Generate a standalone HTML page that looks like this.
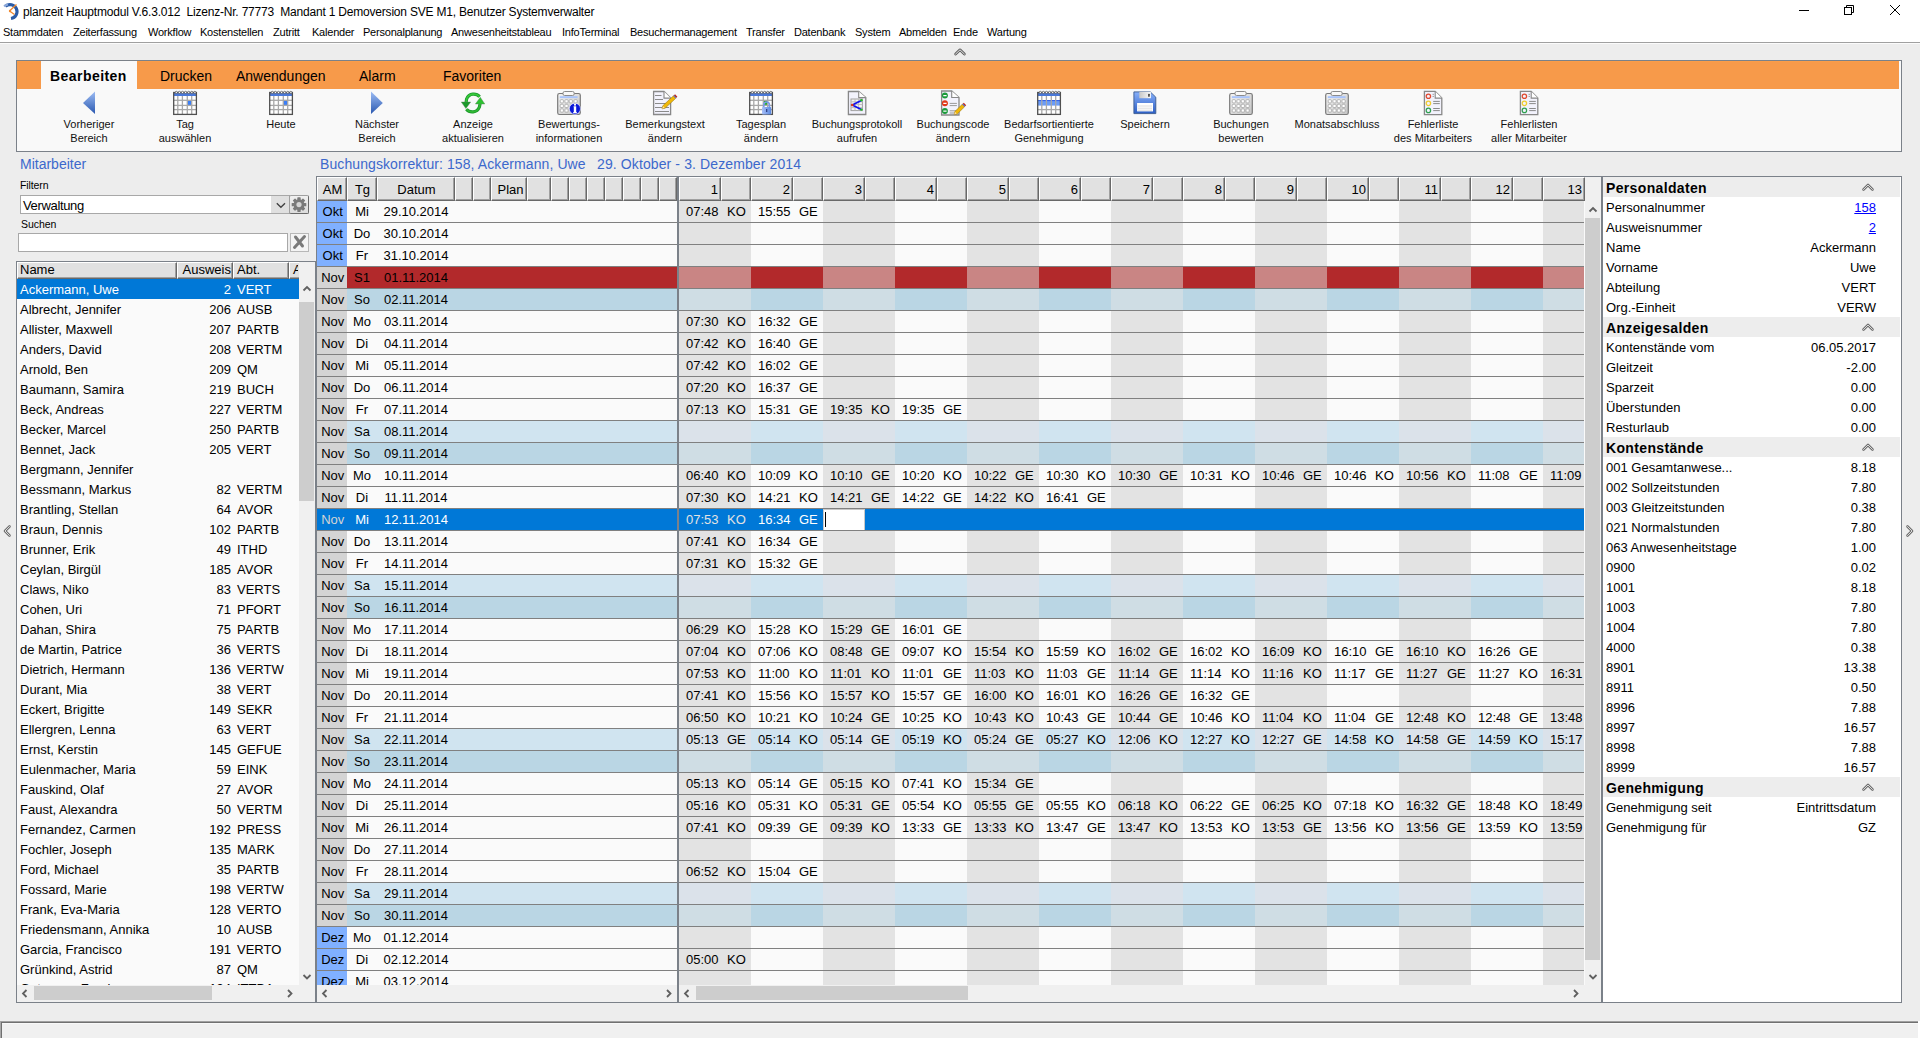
<!DOCTYPE html><html><head><meta charset="utf-8"><title>planzeit</title><style>
*{margin:0;padding:0;box-sizing:border-box}
html,body{width:1920px;height:1040px;overflow:hidden}
body{position:relative;background:#ededed;font-family:"Liberation Sans",sans-serif;color:#000;font-size:13px}
div{position:absolute}
.t{white-space:nowrap}
svg{position:absolute;overflow:visible}
</style></head><body><div style="left:0px;top:0px;width:1920px;height:42px;background:#fff"></div>
<div style="left:0px;top:42px;width:1920px;height:1px;background:#a0a0a0"></div>
<div style="left:0px;top:43px;width:1920px;height:1px;background:#fbfbfb"></div>
<svg style="left:2px;top:2px" width="18" height="18" viewBox="0 0 18 18">
<path d="M3.5 4.2 A7 7 0 1 1 9 16.5" fill="none" stroke="#2a5ca8" stroke-width="3.2"/>
<path d="M2.2 4.5 A7 7 0 0 1 6 2.4" fill="none" stroke="#8aa6d8" stroke-width="2.4"/>
<path d="M7.5 9 L14.5 2.5 M7.5 9 L12.5 12.5" stroke="#f08a30" stroke-width="1.3"/><circle cx="8" cy="9" r="1.2" fill="#f08a30"/>
</svg>
<div class="t" style="left:23px;top:2px;font-size:12px;line-height:21px;letter-spacing:-0.2px;white-space:pre;color:#000">planzeit Hauptmodul V.6.3.012  Lizenz-Nr. 77773  Mandant 1 Demoversion SVE M1, Benutzer Systemverwalter</div>
<div style="left:1799px;top:10px;width:10px;height:1px;background:#000"></div>
<svg style="left:1840px;top:2px" width="18" height="18" viewBox="0 0 18 18">
<rect x="4.5" y="5.5" width="7" height="7" fill="none" stroke="#000" stroke-width="1"/>
<path d="M6.5 5.5 V3.5 H13.5 V10.5 H11.5" fill="none" stroke="#000" stroke-width="1"/>
</svg>
<svg style="left:1886px;top:2px" width="18" height="18" viewBox="0 0 18 18">
<path d="M4 3 L14 13 M14 3 L4 13" stroke="#000" stroke-width="1"/>
</svg>
<div class="t" style="left:3px;top:23px;font-size:11px;line-height:18px;letter-spacing:-0.22px">Stammdaten</div>
<div class="t" style="left:73px;top:23px;font-size:11px;line-height:18px;letter-spacing:-0.22px">Zeiterfassung</div>
<div class="t" style="left:148px;top:23px;font-size:11px;line-height:18px;letter-spacing:-0.22px">Workflow</div>
<div class="t" style="left:200px;top:23px;font-size:11px;line-height:18px;letter-spacing:-0.22px">Kostenstellen</div>
<div class="t" style="left:273px;top:23px;font-size:11px;line-height:18px;letter-spacing:-0.22px">Zutritt</div>
<div class="t" style="left:312px;top:23px;font-size:11px;line-height:18px;letter-spacing:-0.22px">Kalender</div>
<div class="t" style="left:363px;top:23px;font-size:11px;line-height:18px;letter-spacing:-0.22px">Personalplanung</div>
<div class="t" style="left:451px;top:23px;font-size:11px;line-height:18px;letter-spacing:-0.22px">Anwesenheitstableau</div>
<div class="t" style="left:562px;top:23px;font-size:11px;line-height:18px;letter-spacing:-0.22px">InfoTerminal</div>
<div class="t" style="left:630px;top:23px;font-size:11px;line-height:18px;letter-spacing:-0.22px">Besuchermanagement</div>
<div class="t" style="left:746px;top:23px;font-size:11px;line-height:18px;letter-spacing:-0.22px">Transfer</div>
<div class="t" style="left:794px;top:23px;font-size:11px;line-height:18px;letter-spacing:-0.22px">Datenbank</div>
<div class="t" style="left:855px;top:23px;font-size:11px;line-height:18px;letter-spacing:-0.22px">System</div>
<div class="t" style="left:899px;top:23px;font-size:11px;line-height:18px;letter-spacing:-0.22px">Abmelden</div>
<div class="t" style="left:953px;top:23px;font-size:11px;line-height:18px;letter-spacing:-0.22px">Ende</div>
<div class="t" style="left:987px;top:23px;font-size:11px;line-height:18px;letter-spacing:-0.22px">Wartung</div>
<svg style="left:952px;top:45px" width="16" height="12" viewBox="0 0 16 12">
<path d="M3.6 9 L8 4.8 L12.4 9" fill="none" stroke="#606060" stroke-width="2.7" stroke-linecap="round" stroke-linejoin="round"/>
<path d="M3.6 9 L8 4.8 L12.4 9" fill="none" stroke="#f4f4f4" stroke-width="0.9" stroke-linecap="round" stroke-linejoin="round"/>
</svg>
<div style="left:16px;top:60px;width:1886px;height:92px;border:1px solid #7b8189;background:#f9f9f9"></div>
<div style="left:17px;top:61px;width:1882px;height:28px;background:#f79a4a"></div>
<div style="left:17px;top:61px;width:1882px;height:1px;background:#fb9d48"></div>
<div style="left:41px;top:61px;width:96px;height:28px;background:#f9f9f9"></div>
<div class="t" style="left:50px;top:65px;font-size:14px;font-weight:bold;line-height:23px;letter-spacing:0.45px">Bearbeiten</div>
<div class="t" style="left:160px;top:65px;font-size:14px;line-height:23px">Drucken</div>
<div class="t" style="left:236px;top:65px;font-size:14px;line-height:23px">Anwendungen</div>
<div class="t" style="left:359px;top:65px;font-size:14px;line-height:23px">Alarm</div>
<div class="t" style="left:443px;top:65px;font-size:14px;line-height:23px">Favoriten</div>
<svg style="left:77px;top:91px" width="24" height="24" viewBox="0 0 24 24"><defs><linearGradient id="gb" x1="0" y1="0" x2="0" y2="1"><stop offset="0" stop-color="#9cbcf4"/><stop offset="1" stop-color="#2a58b0"/></linearGradient><linearGradient id="gclip" x1="0" y1="0" x2="1" y2="1"><stop offset="0" stop-color="#f4f4f4"/><stop offset="1" stop-color="#c4c4c4"/></linearGradient><linearGradient id="gflop" x1="0" y1="0" x2="0" y2="1"><stop offset="0" stop-color="#88b0fa"/><stop offset="1" stop-color="#2c5ec4"/></linearGradient><linearGradient id="gshut" x1="0" y1="0" x2="1" y2="0"><stop offset="0" stop-color="#c8c8c8"/><stop offset="1" stop-color="#fafafa"/></linearGradient><linearGradient id="glock" x1="0" y1="0" x2="1" y2="0"><stop offset="0" stop-color="#a8c0f8"/><stop offset="1" stop-color="#5a88e0"/></linearGradient></defs><path d="M18 0.5 V23 L6 12 Z" fill="url(#gb)"/></svg>
<div class="t" style="left:29px;top:117px;width:120px;font-size:11px;line-height:14px;text-align:center;color:#111">Vorheriger</div>
<div class="t" style="left:29px;top:131px;width:120px;font-size:11px;line-height:14px;text-align:center;color:#111">Bereich</div>
<svg style="left:173px;top:91px" width="24" height="24" viewBox="0 0 24 24"><rect x="0.7" y="1.5" width="22.7" height="21.9" fill="#fff"/><rect x="14.3" y="9.3" width="4.4" height="5.1" fill="#3a7ef8"/><line x1="4.8" y1="5" x2="4.8" y2="23.4" stroke="#a8a8a8" stroke-width="1.3"/><line x1="9.4" y1="5" x2="9.4" y2="23.4" stroke="#a8a8a8" stroke-width="1.3"/><line x1="14.3" y1="5" x2="14.3" y2="23.4" stroke="#a8a8a8" stroke-width="1.3"/><line x1="18.7" y1="5" x2="18.7" y2="23.4" stroke="#a8a8a8" stroke-width="1.3"/><line x1="0.7" y1="9.3" x2="23.4" y2="9.3" stroke="#a8a8a8" stroke-width="1.3"/><line x1="0.7" y1="14.4" x2="23.4" y2="14.4" stroke="#a8a8a8" stroke-width="1.3"/><line x1="0.7" y1="18.6" x2="23.4" y2="18.6" stroke="#a8a8a8" stroke-width="1.3"/><rect x="0.7" y="1.8" width="22.7" height="3.2" fill="#4a78d8"/><rect x="0.7" y="1.5" width="22.7" height="21.9" fill="none" stroke="#505050" stroke-width="1.3"/><circle cx="3.3" cy="1.4" r="1.1" fill="#fff" stroke="#505050" stroke-width="0.7"/><circle cx="6.4" cy="1.4" r="1.1" fill="#fff" stroke="#505050" stroke-width="0.7"/><circle cx="9.5" cy="1.4" r="1.1" fill="#fff" stroke="#505050" stroke-width="0.7"/><circle cx="12.6" cy="1.4" r="1.1" fill="#fff" stroke="#505050" stroke-width="0.7"/><circle cx="15.7" cy="1.4" r="1.1" fill="#fff" stroke="#505050" stroke-width="0.7"/><circle cx="18.8" cy="1.4" r="1.1" fill="#fff" stroke="#505050" stroke-width="0.7"/><circle cx="21.9" cy="1.4" r="1.1" fill="#fff" stroke="#505050" stroke-width="0.7"/></svg>
<div class="t" style="left:125px;top:117px;width:120px;font-size:11px;line-height:14px;text-align:center;color:#111">Tag</div>
<div class="t" style="left:125px;top:131px;width:120px;font-size:11px;line-height:14px;text-align:center;color:#111">auswählen</div>
<svg style="left:269px;top:91px" width="24" height="24" viewBox="0 0 24 24"><rect x="0.7" y="1.5" width="22.7" height="21.9" fill="#fff"/><rect x="14.3" y="9.3" width="4.4" height="5.1" fill="#3a7ef8"/><line x1="4.8" y1="5" x2="4.8" y2="23.4" stroke="#a8a8a8" stroke-width="1.3"/><line x1="9.4" y1="5" x2="9.4" y2="23.4" stroke="#a8a8a8" stroke-width="1.3"/><line x1="14.3" y1="5" x2="14.3" y2="23.4" stroke="#a8a8a8" stroke-width="1.3"/><line x1="18.7" y1="5" x2="18.7" y2="23.4" stroke="#a8a8a8" stroke-width="1.3"/><line x1="0.7" y1="9.3" x2="23.4" y2="9.3" stroke="#a8a8a8" stroke-width="1.3"/><line x1="0.7" y1="14.4" x2="23.4" y2="14.4" stroke="#a8a8a8" stroke-width="1.3"/><line x1="0.7" y1="18.6" x2="23.4" y2="18.6" stroke="#a8a8a8" stroke-width="1.3"/><rect x="0.7" y="1.8" width="22.7" height="3.2" fill="#4a78d8"/><rect x="0.7" y="1.5" width="22.7" height="21.9" fill="none" stroke="#505050" stroke-width="1.3"/><circle cx="3.3" cy="1.4" r="1.1" fill="#fff" stroke="#505050" stroke-width="0.7"/><circle cx="6.4" cy="1.4" r="1.1" fill="#fff" stroke="#505050" stroke-width="0.7"/><circle cx="9.5" cy="1.4" r="1.1" fill="#fff" stroke="#505050" stroke-width="0.7"/><circle cx="12.6" cy="1.4" r="1.1" fill="#fff" stroke="#505050" stroke-width="0.7"/><circle cx="15.7" cy="1.4" r="1.1" fill="#fff" stroke="#505050" stroke-width="0.7"/><circle cx="18.8" cy="1.4" r="1.1" fill="#fff" stroke="#505050" stroke-width="0.7"/><circle cx="21.9" cy="1.4" r="1.1" fill="#fff" stroke="#505050" stroke-width="0.7"/></svg>
<div class="t" style="left:221px;top:117px;width:120px;font-size:11px;line-height:14px;text-align:center;color:#111">Heute</div>
<svg style="left:365px;top:91px" width="24" height="24" viewBox="0 0 24 24"><path d="M6 0.5 V23 L17.8 12 Z" fill="url(#gb)"/></svg>
<div class="t" style="left:317px;top:117px;width:120px;font-size:11px;line-height:14px;text-align:center;color:#111">Nächster</div>
<div class="t" style="left:317px;top:131px;width:120px;font-size:11px;line-height:14px;text-align:center;color:#111">Bereich</div>
<svg style="left:461px;top:91px" width="24" height="24" viewBox="0 0 24 24"><path d="M18.6 5.8 C15.5 2 8 1.8 5.6 8 L5.1 11.5" fill="none" stroke="#1c9a2c" stroke-width="3.2"/><path d="M18.6 5.8 C15.5 2 8 1.8 5.6 8 L5.1 11.5" fill="none" stroke="#36c83a" stroke-width="1.6"/><path d="M0.3 11 H9.7 L4.9 17.5 Z" fill="#1a9a2a" stroke="#5a7a5a" stroke-width="0.4"/><path d="M5.4 18.2 C8.5 22 16 22.2 18.4 16 L19.1 12.5" fill="none" stroke="#1c9a2c" stroke-width="3.2"/><path d="M5.4 18.2 C8.5 22 16 22.2 18.4 16 L19.1 12.5" fill="none" stroke="#30b834" stroke-width="1.6"/><path d="M14.4 13 H23.8 L19.3 6.3 Z" fill="#2cc430" stroke="#5a7a5a" stroke-width="0.4"/></svg>
<div class="t" style="left:413px;top:117px;width:120px;font-size:11px;line-height:14px;text-align:center;color:#111">Anzeige</div>
<div class="t" style="left:413px;top:131px;width:120px;font-size:11px;line-height:14px;text-align:center;color:#111">aktualisieren</div>
<svg style="left:557px;top:91px" width="24" height="24" viewBox="0 0 24 24"><rect x="0.7" y="2.5" width="22.6" height="21" rx="1.8" fill="url(#gclip)" stroke="#7a7a7a" stroke-width="1.2"/><rect x="6" y="0.5" width="11.2" height="4" rx="1.6" fill="#f8f8f8" stroke="#8a8a8a" stroke-width="1"/><rect x="2.8" y="5.2" width="17.8" height="1.9" fill="#a8c4fc"/><rect x="3.2" y="8.7" width="3.2" height="3.2" rx="0.8" fill="#fff" stroke="#a4a4a4" stroke-width="0.8"/><rect x="7.9" y="8.7" width="3.2" height="3.2" rx="0.8" fill="#fff" stroke="#a4a4a4" stroke-width="0.8"/><rect x="12.2" y="8.7" width="3.2" height="3.2" rx="0.8" fill="#fff" stroke="#a4a4a4" stroke-width="0.8"/><rect x="17.0" y="8.7" width="3.2" height="3.2" rx="0.8" fill="#fff" stroke="#a4a4a4" stroke-width="0.8"/><rect x="3.2" y="13.3" width="3.2" height="3.2" rx="0.8" fill="#fff" stroke="#a4a4a4" stroke-width="0.8"/><rect x="7.9" y="13.3" width="3.2" height="3.2" rx="0.8" fill="#fff" stroke="#a4a4a4" stroke-width="0.8"/><rect x="3.2" y="17.9" width="3.2" height="3.2" rx="0.8" fill="#fff" stroke="#a4a4a4" stroke-width="0.8"/><rect x="7.9" y="17.9" width="3.2" height="3.2" rx="0.8" fill="#fff" stroke="#a4a4a4" stroke-width="0.8"/><circle cx="17.9" cy="17.8" r="5.6" fill="#0a18d8" stroke="#fff" stroke-width="0.6"/><path d="M16.6 15.2 H19.2 V21.2 H20 V22.2 H16 V21.2 H16.8 V16.2 H16.6 Z" fill="#fff"/><circle cx="18" cy="13.7" r="1.1" fill="#fff"/></svg>
<div class="t" style="left:509px;top:117px;width:120px;font-size:11px;line-height:14px;text-align:center;color:#111">Bewertungs-</div>
<div class="t" style="left:509px;top:131px;width:120px;font-size:11px;line-height:14px;text-align:center;color:#111">informationen</div>
<svg style="left:653px;top:91px" width="24" height="24" viewBox="0 0 24 24"><path d="M0.6 0.5 H11 L17.6 7.1 V23.5 H0.6 Z" fill="#f2f2fc" stroke="#888" stroke-width="1.3"/><path d="M11 0.5 V7.1 H17.6" fill="#fff" stroke="#888" stroke-width="1.1"/><path d="M2 4.5 H8.5 M2 8.5 H10 M2 12.5 H16 M2 16.5 H16 M2 20.5 H16" stroke="#8a8a8a" stroke-width="1.1"/><path d="M9.00 17.80 L12.06 17.27 L22.75 7.34 L20.43 4.85 L9.75 14.78 Z" fill="#f0b808" stroke="#8a6a10" stroke-width="0.5"/><path d="M9.00 17.80 L11.60 16.78 L10.21 15.28 Z" fill="#ffe0a0"/><path d="M22.75 7.34 L24.36 5.85 L22.04 3.35 L20.43 4.85 Z" fill="#c02818"/><path d="M22.75 7.34 L23.41 6.73 L21.09 4.24 L20.43 4.85 Z" fill="#4a8af0"/></svg>
<div class="t" style="left:605px;top:117px;width:120px;font-size:11px;line-height:14px;text-align:center;color:#111">Bemerkungstext</div>
<div class="t" style="left:605px;top:131px;width:120px;font-size:11px;line-height:14px;text-align:center;color:#111">ändern</div>
<svg style="left:749px;top:91px" width="24" height="24" viewBox="0 0 24 24"><rect x="0.7" y="1.5" width="22.7" height="21.9" fill="#fff"/><rect x="14.3" y="9.3" width="4.4" height="5.1" fill="#22b030"/><line x1="4.8" y1="5" x2="4.8" y2="23.4" stroke="#a8a8a8" stroke-width="1.3"/><line x1="9.4" y1="5" x2="9.4" y2="23.4" stroke="#a8a8a8" stroke-width="1.3"/><line x1="14.3" y1="5" x2="14.3" y2="23.4" stroke="#a8a8a8" stroke-width="1.3"/><line x1="18.7" y1="5" x2="18.7" y2="23.4" stroke="#a8a8a8" stroke-width="1.3"/><line x1="0.7" y1="9.3" x2="23.4" y2="9.3" stroke="#a8a8a8" stroke-width="1.3"/><line x1="0.7" y1="14.4" x2="23.4" y2="14.4" stroke="#a8a8a8" stroke-width="1.3"/><line x1="0.7" y1="18.6" x2="23.4" y2="18.6" stroke="#a8a8a8" stroke-width="1.3"/><rect x="0.7" y="1.8" width="22.7" height="3.2" fill="#4a78d8"/><rect x="0.7" y="1.5" width="22.7" height="21.9" fill="none" stroke="#505050" stroke-width="1.3"/><circle cx="3.3" cy="1.4" r="1.1" fill="#fff" stroke="#505050" stroke-width="0.7"/><circle cx="6.4" cy="1.4" r="1.1" fill="#fff" stroke="#505050" stroke-width="0.7"/><circle cx="9.5" cy="1.4" r="1.1" fill="#fff" stroke="#505050" stroke-width="0.7"/><circle cx="12.6" cy="1.4" r="1.1" fill="#fff" stroke="#505050" stroke-width="0.7"/><circle cx="15.7" cy="1.4" r="1.1" fill="#fff" stroke="#505050" stroke-width="0.7"/><circle cx="18.8" cy="1.4" r="1.1" fill="#fff" stroke="#505050" stroke-width="0.7"/><circle cx="21.9" cy="1.4" r="1.1" fill="#fff" stroke="#505050" stroke-width="0.7"/><path d="M14.8 16 V13.8 A2.8 2.8 0 0 1 20.4 13.8 V16" fill="none" stroke="#7a9ae8" stroke-width="1.6"/><rect x="13" y="16" width="9.2" height="7.5" rx="0.8" fill="url(#glock)"/><rect x="17.1" y="18" width="1.2" height="3" fill="#2a3a80"/></svg>
<div class="t" style="left:701px;top:117px;width:120px;font-size:11px;line-height:14px;text-align:center;color:#111">Tagesplan</div>
<div class="t" style="left:701px;top:131px;width:120px;font-size:11px;line-height:14px;text-align:center;color:#111">ändern</div>
<svg style="left:845px;top:91px" width="24" height="24" viewBox="0 0 24 24"><path d="M3.4 0.5 H13.7 L20.8 6.6 V23.5 H3.4 Z" fill="#f2f2fc" stroke="#888" stroke-width="1.3"/><path d="M13.7 0.5 V6.6 H20.8" fill="#fff" stroke="#888" stroke-width="1.1"/><rect x="6" y="8" width="11.4" height="11.6" fill="#f4f4f4" stroke="#a0a0a0" stroke-width="1"/><path d="M6 10.8 H17.4 M6 13.6 H17.4 M6 16.6 H17.4 M10 8 V19.6 M13.6 8 V19.6" stroke="#b8b8b8" stroke-width="0.9"/><path d="M16.3 9.4 L7.3 14 L16.3 18.5" fill="none" stroke="#1010f0" stroke-width="1.7"/><circle cx="7.3" cy="14" r="1.3" fill="#e03a10"/><circle cx="16.4" cy="9.3" r="1.2" fill="#20c020"/><circle cx="16.4" cy="18.6" r="1.2" fill="#20c020"/></svg>
<div class="t" style="left:797px;top:117px;width:120px;font-size:11px;line-height:14px;text-align:center;color:#111">Buchungsprotokoll</div>
<div class="t" style="left:797px;top:131px;width:120px;font-size:11px;line-height:14px;text-align:center;color:#111">aufrufen</div>
<svg style="left:941px;top:91px" width="24" height="24" viewBox="0 0 24 24"><path d="M0.6 0 H10.7 L18 6.5 V24 H0.6 Z" fill="#f2f2fc" stroke="#888" stroke-width="1.3"/><path d="M10.7 0 V6.5 H18" fill="#fff" stroke="#888" stroke-width="1.1"/><circle cx="3.9" cy="4.6" r="3" fill="#1a9a3a"/><circle cx="3.9" cy="12.3" r="3" fill="#e03818"/><circle cx="3.9" cy="20.1" r="3" fill="#1a9a3a"/><path d="M2.3 4.6 H5.6 M2.3 12.3 H5.6 M2.3 20.1 H5.6" stroke="#fff" stroke-width="1.2"/><path d="M8.7 12.4 H15.9 M8.7 14.6 H15.9 M8.7 19.8 H15.9 M8.7 22 H13" stroke="#9a9a9a" stroke-width="1"/><path d="M13.20 23.60 L16.25 22.99 L23.62 15.75 L21.24 13.33 L13.86 20.57 Z" fill="#f0b808" stroke="#8a6a10" stroke-width="0.5"/><path d="M13.20 23.60 L15.77 22.51 L14.34 21.05 Z" fill="#ffe0a0"/><path d="M23.62 15.75 L25.19 14.21 L22.81 11.79 L21.24 13.33 Z" fill="#c02818"/><path d="M23.62 15.75 L24.26 15.12 L21.88 12.70 L21.24 13.33 Z" fill="#4a8af0"/></svg>
<div class="t" style="left:893px;top:117px;width:120px;font-size:11px;line-height:14px;text-align:center;color:#111">Buchungscode</div>
<div class="t" style="left:893px;top:131px;width:120px;font-size:11px;line-height:14px;text-align:center;color:#111">ändern</div>
<svg style="left:1037px;top:91px" width="24" height="24" viewBox="0 0 24 24"><rect x="0.7" y="1.5" width="22.7" height="21.9" fill="#fff"/><rect x="0.7" y="9.3" width="22.7" height="5.3" fill="#6a9cf8"/><line x1="0.7" y1="9.6" x2="23.4" y2="9.6" stroke="#2a5ae8" stroke-width="1"/><line x1="4.8" y1="5" x2="4.8" y2="23.4" stroke="#a8a8a8" stroke-width="1.3"/><line x1="9.4" y1="5" x2="9.4" y2="23.4" stroke="#a8a8a8" stroke-width="1.3"/><line x1="14.3" y1="5" x2="14.3" y2="23.4" stroke="#a8a8a8" stroke-width="1.3"/><line x1="18.7" y1="5" x2="18.7" y2="23.4" stroke="#a8a8a8" stroke-width="1.3"/><line x1="0.7" y1="18.6" x2="23.4" y2="18.6" stroke="#a8a8a8" stroke-width="1.3"/><rect x="0.7" y="1.8" width="22.7" height="3.2" fill="#4a78d8"/><rect x="0.7" y="1.5" width="22.7" height="21.9" fill="none" stroke="#505050" stroke-width="1.3"/><circle cx="3.3" cy="1.4" r="1.1" fill="#fff" stroke="#505050" stroke-width="0.7"/><circle cx="6.4" cy="1.4" r="1.1" fill="#fff" stroke="#505050" stroke-width="0.7"/><circle cx="9.5" cy="1.4" r="1.1" fill="#fff" stroke="#505050" stroke-width="0.7"/><circle cx="12.6" cy="1.4" r="1.1" fill="#fff" stroke="#505050" stroke-width="0.7"/><circle cx="15.7" cy="1.4" r="1.1" fill="#fff" stroke="#505050" stroke-width="0.7"/><circle cx="18.8" cy="1.4" r="1.1" fill="#fff" stroke="#505050" stroke-width="0.7"/><circle cx="21.9" cy="1.4" r="1.1" fill="#fff" stroke="#505050" stroke-width="0.7"/></svg>
<div class="t" style="left:989px;top:117px;width:120px;font-size:11px;line-height:14px;text-align:center;color:#111">Bedarfsortientierte</div>
<div class="t" style="left:989px;top:131px;width:120px;font-size:11px;line-height:14px;text-align:center;color:#111">Genehmigung</div>
<svg style="left:1133px;top:91px" width="24" height="24" viewBox="0 0 24 24"><path d="M0.9 0.9 H17.3 L22.8 6.2 V22.6 H0.9 Z" fill="url(#gflop)" stroke="#3a5a90" stroke-width="0.9"/><rect x="6.3" y="0.9" width="11.6" height="6.3" fill="url(#gshut)"/><rect x="15.2" y="2.7" width="1.5" height="3.1" rx="0.6" fill="#303030"/><rect x="4.1" y="12" width="15.9" height="8.4" fill="#fff"/><path d="M5 15 H19 M5 17.2 H19 M5 19.2 H19" stroke="#c8c8c8" stroke-width="0.6"/></svg>
<div class="t" style="left:1085px;top:117px;width:120px;font-size:11px;line-height:14px;text-align:center;color:#111">Speichern</div>
<svg style="left:1229px;top:91px" width="24" height="24" viewBox="0 0 24 24"><rect x="0.7" y="2.5" width="22.6" height="21" rx="1.8" fill="url(#gclip)" stroke="#7a7a7a" stroke-width="1.2"/><rect x="6" y="0.5" width="11.2" height="4" rx="1.6" fill="#f8f8f8" stroke="#8a8a8a" stroke-width="1"/><rect x="2.8" y="5.2" width="17.8" height="1.9" fill="#a8c4fc"/><rect x="3.2" y="8.7" width="3.2" height="3.2" rx="0.8" fill="#fff" stroke="#a4a4a4" stroke-width="0.8"/><rect x="7.9" y="8.7" width="3.2" height="3.2" rx="0.8" fill="#fff" stroke="#a4a4a4" stroke-width="0.8"/><rect x="12.2" y="8.7" width="3.2" height="3.2" rx="0.8" fill="#fff" stroke="#a4a4a4" stroke-width="0.8"/><rect x="17.0" y="8.7" width="3.2" height="3.2" rx="0.8" fill="#fff" stroke="#a4a4a4" stroke-width="0.8"/><rect x="3.2" y="13.3" width="3.2" height="3.2" rx="0.8" fill="#fff" stroke="#a4a4a4" stroke-width="0.8"/><rect x="7.9" y="13.3" width="3.2" height="3.2" rx="0.8" fill="#fff" stroke="#a4a4a4" stroke-width="0.8"/><rect x="12.2" y="13.3" width="3.2" height="3.2" rx="0.8" fill="#fff" stroke="#a4a4a4" stroke-width="0.8"/><rect x="17.0" y="13.3" width="3.2" height="3.2" rx="0.8" fill="#fff" stroke="#a4a4a4" stroke-width="0.8"/><rect x="3.2" y="17.9" width="3.2" height="3.2" rx="0.8" fill="#fff" stroke="#a4a4a4" stroke-width="0.8"/><rect x="7.9" y="17.9" width="3.2" height="3.2" rx="0.8" fill="#fff" stroke="#a4a4a4" stroke-width="0.8"/><rect x="12.2" y="17.9" width="3.2" height="3.2" rx="0.8" fill="#fff" stroke="#a4a4a4" stroke-width="0.8"/><rect x="17.0" y="17.9" width="3.2" height="3.2" rx="0.8" fill="#fff" stroke="#a4a4a4" stroke-width="0.8"/></svg>
<div class="t" style="left:1181px;top:117px;width:120px;font-size:11px;line-height:14px;text-align:center;color:#111">Buchungen</div>
<div class="t" style="left:1181px;top:131px;width:120px;font-size:11px;line-height:14px;text-align:center;color:#111">bewerten</div>
<svg style="left:1325px;top:91px" width="24" height="24" viewBox="0 0 24 24"><rect x="0.7" y="2.5" width="22.6" height="21" rx="1.8" fill="url(#gclip)" stroke="#7a7a7a" stroke-width="1.2"/><rect x="6" y="0.5" width="11.2" height="4" rx="1.6" fill="#f8f8f8" stroke="#8a8a8a" stroke-width="1"/><rect x="2.8" y="5.2" width="17.8" height="1.9" fill="#a8c4fc"/><rect x="3.2" y="8.7" width="3.2" height="3.2" rx="0.8" fill="#fff" stroke="#a4a4a4" stroke-width="0.8"/><rect x="7.9" y="8.7" width="3.2" height="3.2" rx="0.8" fill="#fff" stroke="#a4a4a4" stroke-width="0.8"/><rect x="12.2" y="8.7" width="3.2" height="3.2" rx="0.8" fill="#fff" stroke="#a4a4a4" stroke-width="0.8"/><rect x="17.0" y="8.7" width="3.2" height="3.2" rx="0.8" fill="#fff" stroke="#a4a4a4" stroke-width="0.8"/><rect x="3.2" y="13.3" width="3.2" height="3.2" rx="0.8" fill="#fff" stroke="#a4a4a4" stroke-width="0.8"/><rect x="7.9" y="13.3" width="3.2" height="3.2" rx="0.8" fill="#fff" stroke="#a4a4a4" stroke-width="0.8"/><rect x="12.2" y="13.3" width="3.2" height="3.2" rx="0.8" fill="#fff" stroke="#a4a4a4" stroke-width="0.8"/><rect x="17.0" y="13.3" width="3.2" height="3.2" rx="0.8" fill="#fff" stroke="#a4a4a4" stroke-width="0.8"/><rect x="3.2" y="17.9" width="3.2" height="3.2" rx="0.8" fill="#fff" stroke="#a4a4a4" stroke-width="0.8"/><rect x="7.9" y="17.9" width="3.2" height="3.2" rx="0.8" fill="#fff" stroke="#a4a4a4" stroke-width="0.8"/><rect x="12.2" y="17.9" width="3.2" height="3.2" rx="0.8" fill="#fff" stroke="#a4a4a4" stroke-width="0.8"/><rect x="17.0" y="17.9" width="3.2" height="3.2" rx="0.8" fill="#fff" stroke="#a4a4a4" stroke-width="0.8"/></svg>
<div class="t" style="left:1277px;top:117px;width:120px;font-size:11px;line-height:14px;text-align:center;color:#111">Monatsabschluss</div>
<svg style="left:1421px;top:91px" width="24" height="24" viewBox="0 0 24 24"><path d="M3.4 0.4 H14.2 L20.8 7.1 V23.6 H3.4 Z" fill="#f2f2fc" stroke="#888" stroke-width="1.3"/><path d="M14.2 0.4 V7.1 H20.8" fill="#fff" stroke="#888" stroke-width="1.1"/><circle cx="7.4" cy="5.2" r="2.2" fill="none" stroke="#e04a30" stroke-width="1.25"/><circle cx="7.4" cy="12.3" r="2.2" fill="none" stroke="#f0cc30" stroke-width="1.25"/><circle cx="7.4" cy="19.4" r="2.2" fill="none" stroke="#30a050" stroke-width="1.25"/><path d="M12.2 10.4 H18.8 M12.2 12.6 H18.8 M12.2 17.5 H18.8 M12.2 19.6 H18.8 M11.6 3.3 H12.8 M11.6 5.4 H12.8" stroke="#8a8a8a" stroke-width="1"/></svg>
<div class="t" style="left:1373px;top:117px;width:120px;font-size:11px;line-height:14px;text-align:center;color:#111">Fehlerliste</div>
<div class="t" style="left:1373px;top:131px;width:120px;font-size:11px;line-height:14px;text-align:center;color:#111">des Mitarbeiters</div>
<svg style="left:1517px;top:91px" width="24" height="24" viewBox="0 0 24 24"><path d="M3.4 0.4 H14.2 L20.8 7.1 V23.6 H3.4 Z" fill="#f2f2fc" stroke="#888" stroke-width="1.3"/><path d="M14.2 0.4 V7.1 H20.8" fill="#fff" stroke="#888" stroke-width="1.1"/><circle cx="7.4" cy="5.2" r="2.2" fill="none" stroke="#e04a30" stroke-width="1.25"/><circle cx="7.4" cy="12.3" r="2.2" fill="none" stroke="#f0cc30" stroke-width="1.25"/><circle cx="7.4" cy="19.4" r="2.2" fill="none" stroke="#30a050" stroke-width="1.25"/><path d="M12.2 10.4 H18.8 M12.2 12.6 H18.8 M12.2 17.5 H18.8 M12.2 19.6 H18.8 M11.6 3.3 H12.8 M11.6 5.4 H12.8" stroke="#8a8a8a" stroke-width="1"/></svg>
<div class="t" style="left:1469px;top:117px;width:120px;font-size:11px;line-height:14px;text-align:center;color:#111">Fehlerlisten</div>
<div class="t" style="left:1469px;top:131px;width:120px;font-size:11px;line-height:14px;text-align:center;color:#111">aller Mitarbeiter</div>
<div class="t" style="left:20px;top:155px;font-size:14px;line-height:18px;color:#3c68cc">Mitarbeiter</div>
<div class="t" style="left:20px;top:177px;font-size:10.5px;line-height:16px;letter-spacing:-0.1px">Filtern</div>
<div style="left:20px;top:195px;width:270px;height:19px;background:#fff;border:1px solid #a8a8a8"></div>
<div style="left:271px;top:196px;width:18px;height:17px;background:#e0e0e0"></div>
<svg style="left:275px;top:201px" width="12" height="9" viewBox="0 0 12 9"><path d="M1.8 2.2 L5.9 6.3 L10 2.2" fill="none" stroke="#404040" stroke-width="1.3"/></svg>
<div class="t" style="left:23px;top:197px;font-size:13px;line-height:18px;letter-spacing:-0.35px">Verwaltung</div>
<div style="left:289px;top:195px;width:20px;height:19px;background:linear-gradient(#f0f0f0,#dcdcdc);border:1px solid #a0a0a0;border-right-color:#6a6a6a;border-bottom-color:#6a6a6a;border-radius:2px"></div>
<svg style="left:290px;top:196px" width="18" height="17" viewBox="0 0 18 17">
<g transform="translate(9,8.6)" fill="#7a7a7a">
<circle r="5.4"/>
<rect x="-1.7" y="-7.3" width="3.4" height="3.4" rx="0.6" transform="rotate(0)"/><rect x="-1.7" y="-7.3" width="3.4" height="3.4" rx="0.6" transform="rotate(45)"/><rect x="-1.7" y="-7.3" width="3.4" height="3.4" rx="0.6" transform="rotate(90)"/><rect x="-1.7" y="-7.3" width="3.4" height="3.4" rx="0.6" transform="rotate(135)"/><rect x="-1.7" y="-7.3" width="3.4" height="3.4" rx="0.6" transform="rotate(180)"/><rect x="-1.7" y="-7.3" width="3.4" height="3.4" rx="0.6" transform="rotate(225)"/><rect x="-1.7" y="-7.3" width="3.4" height="3.4" rx="0.6" transform="rotate(270)"/><rect x="-1.7" y="-7.3" width="3.4" height="3.4" rx="0.6" transform="rotate(315)"/>
<circle r="2.6" fill="#d4d4d4"/>
</g></svg>
<div class="t" style="left:21px;top:216px;font-size:10.5px;line-height:16px;letter-spacing:-0.05px">Suchen</div>
<div style="left:18px;top:233px;width:270px;height:19px;background:#fff;border:1px solid #a8a8a8"></div>
<div style="left:290px;top:233px;width:19px;height:19px;background:#f4f4f4;border:1px solid #b8b8b8"></div>
<svg style="left:290px;top:233px" width="19" height="19" viewBox="0 0 19 19"><path d="M4.5 14.5 L14.5 3.5 M5.5 4 L12.5 13" stroke="#7a7a7a" stroke-width="3" stroke-linecap="round"/></svg>
<div style="left:16px;top:261px;width:300px;height:742px;border:1px solid #7b8189;background:#f0f0f0"></div>
<div style="left:17px;top:279px;width:282px;height:706px;background:#fafafa"></div>
<div style="left:17px;top:262px;width:160px;height:17px;background:#e1e1e1;border-top:1px solid #fff;border-left:1px solid #fff;box-shadow:inset -1px -1px 0 #a0a0a0;border-right:1px solid #696969;border-bottom:1px solid #696969;overflow:hidden"></div>
<div style="left:177px;top:262px;width:56px;height:17px;background:#e1e1e1;border-top:1px solid #fff;border-left:1px solid #fff;box-shadow:inset -1px -1px 0 #a0a0a0;border-right:1px solid #696969;border-bottom:1px solid #696969;overflow:hidden"></div>
<div style="left:233px;top:262px;width:56px;height:17px;background:#e1e1e1;border-top:1px solid #fff;border-left:1px solid #fff;box-shadow:inset -1px -1px 0 #a0a0a0;border-right:1px solid #696969;border-bottom:1px solid #696969;overflow:hidden"></div>
<div style="left:289px;top:262px;width:10px;height:17px;background:#e1e1e1;border-top:1px solid #fff;border-left:1px solid #fff;box-shadow:inset 0 -1px 0 #a0a0a0;border-bottom:1px solid #696969"></div>
<div class="t" style="left:20px;top:262px;font-size:13px;line-height:16px">Name</div>
<div class="t" style="left:177px;top:262px;width:54px;font-size:13px;line-height:16px;text-align:right">Ausweis</div>
<div class="t" style="left:237px;top:262px;font-size:13px;line-height:16px">Abt.</div>
<div style="left:289px;top:263px;width:9px;height:15px;overflow:hidden"><div class="t" style="left:4px;top:-1px;font-size:13px;line-height:16px">A</div></div>
<div style="left:17px;top:279px;width:282px;height:706px;overflow:hidden">
<div style="left:0;top:0px;width:282px;height:20px;background:#0078d7"></div>
<div class="t" style="left:3px;top:1px;font-size:13px;line-height:20px;color:#fff">Ackermann, Uwe</div>
<div class="t" style="left:160px;top:1px;width:54px;text-align:right;font-size:13px;line-height:20px;color:#fff">2</div>
<div class="t" style="left:220px;top:1px;font-size:13px;line-height:20px;color:#fff">VERT</div>
<div class="t" style="left:3px;top:21px;font-size:13px;line-height:20px;color:#000">Albrecht, Jennifer</div>
<div class="t" style="left:160px;top:21px;width:54px;text-align:right;font-size:13px;line-height:20px;color:#000">206</div>
<div class="t" style="left:220px;top:21px;font-size:13px;line-height:20px;color:#000">AUSB</div>
<div class="t" style="left:3px;top:41px;font-size:13px;line-height:20px;color:#000">Allister, Maxwell</div>
<div class="t" style="left:160px;top:41px;width:54px;text-align:right;font-size:13px;line-height:20px;color:#000">207</div>
<div class="t" style="left:220px;top:41px;font-size:13px;line-height:20px;color:#000">PARTB</div>
<div class="t" style="left:3px;top:61px;font-size:13px;line-height:20px;color:#000">Anders, David</div>
<div class="t" style="left:160px;top:61px;width:54px;text-align:right;font-size:13px;line-height:20px;color:#000">208</div>
<div class="t" style="left:220px;top:61px;font-size:13px;line-height:20px;color:#000">VERTM</div>
<div class="t" style="left:3px;top:81px;font-size:13px;line-height:20px;color:#000">Arnold, Ben</div>
<div class="t" style="left:160px;top:81px;width:54px;text-align:right;font-size:13px;line-height:20px;color:#000">209</div>
<div class="t" style="left:220px;top:81px;font-size:13px;line-height:20px;color:#000">QM</div>
<div class="t" style="left:3px;top:101px;font-size:13px;line-height:20px;color:#000">Baumann, Samira</div>
<div class="t" style="left:160px;top:101px;width:54px;text-align:right;font-size:13px;line-height:20px;color:#000">219</div>
<div class="t" style="left:220px;top:101px;font-size:13px;line-height:20px;color:#000">BUCH</div>
<div class="t" style="left:3px;top:121px;font-size:13px;line-height:20px;color:#000">Beck, Andreas</div>
<div class="t" style="left:160px;top:121px;width:54px;text-align:right;font-size:13px;line-height:20px;color:#000">227</div>
<div class="t" style="left:220px;top:121px;font-size:13px;line-height:20px;color:#000">VERTM</div>
<div class="t" style="left:3px;top:141px;font-size:13px;line-height:20px;color:#000">Becker, Marcel</div>
<div class="t" style="left:160px;top:141px;width:54px;text-align:right;font-size:13px;line-height:20px;color:#000">250</div>
<div class="t" style="left:220px;top:141px;font-size:13px;line-height:20px;color:#000">PARTB</div>
<div class="t" style="left:3px;top:161px;font-size:13px;line-height:20px;color:#000">Bennet, Jack</div>
<div class="t" style="left:160px;top:161px;width:54px;text-align:right;font-size:13px;line-height:20px;color:#000">205</div>
<div class="t" style="left:220px;top:161px;font-size:13px;line-height:20px;color:#000">VERT</div>
<div class="t" style="left:3px;top:181px;font-size:13px;line-height:20px;color:#000">Bergmann, Jennifer</div>
<div class="t" style="left:160px;top:181px;width:54px;text-align:right;font-size:13px;line-height:20px;color:#000"></div>
<div class="t" style="left:220px;top:181px;font-size:13px;line-height:20px;color:#000"></div>
<div class="t" style="left:3px;top:201px;font-size:13px;line-height:20px;color:#000">Bessmann, Markus</div>
<div class="t" style="left:160px;top:201px;width:54px;text-align:right;font-size:13px;line-height:20px;color:#000">82</div>
<div class="t" style="left:220px;top:201px;font-size:13px;line-height:20px;color:#000">VERTM</div>
<div class="t" style="left:3px;top:221px;font-size:13px;line-height:20px;color:#000">Brantling, Stellan</div>
<div class="t" style="left:160px;top:221px;width:54px;text-align:right;font-size:13px;line-height:20px;color:#000">64</div>
<div class="t" style="left:220px;top:221px;font-size:13px;line-height:20px;color:#000">AVOR</div>
<div class="t" style="left:3px;top:241px;font-size:13px;line-height:20px;color:#000">Braun, Dennis</div>
<div class="t" style="left:160px;top:241px;width:54px;text-align:right;font-size:13px;line-height:20px;color:#000">102</div>
<div class="t" style="left:220px;top:241px;font-size:13px;line-height:20px;color:#000">PARTB</div>
<div class="t" style="left:3px;top:261px;font-size:13px;line-height:20px;color:#000">Brunner, Erik</div>
<div class="t" style="left:160px;top:261px;width:54px;text-align:right;font-size:13px;line-height:20px;color:#000">49</div>
<div class="t" style="left:220px;top:261px;font-size:13px;line-height:20px;color:#000">ITHD</div>
<div class="t" style="left:3px;top:281px;font-size:13px;line-height:20px;color:#000">Ceylan, Birgül</div>
<div class="t" style="left:160px;top:281px;width:54px;text-align:right;font-size:13px;line-height:20px;color:#000">185</div>
<div class="t" style="left:220px;top:281px;font-size:13px;line-height:20px;color:#000">AVOR</div>
<div class="t" style="left:3px;top:301px;font-size:13px;line-height:20px;color:#000">Claws, Niko</div>
<div class="t" style="left:160px;top:301px;width:54px;text-align:right;font-size:13px;line-height:20px;color:#000">83</div>
<div class="t" style="left:220px;top:301px;font-size:13px;line-height:20px;color:#000">VERTS</div>
<div class="t" style="left:3px;top:321px;font-size:13px;line-height:20px;color:#000">Cohen, Uri</div>
<div class="t" style="left:160px;top:321px;width:54px;text-align:right;font-size:13px;line-height:20px;color:#000">71</div>
<div class="t" style="left:220px;top:321px;font-size:13px;line-height:20px;color:#000">PFORT</div>
<div class="t" style="left:3px;top:341px;font-size:13px;line-height:20px;color:#000">Dahan, Shira</div>
<div class="t" style="left:160px;top:341px;width:54px;text-align:right;font-size:13px;line-height:20px;color:#000">75</div>
<div class="t" style="left:220px;top:341px;font-size:13px;line-height:20px;color:#000">PARTB</div>
<div class="t" style="left:3px;top:361px;font-size:13px;line-height:20px;color:#000">de Martin, Patrice</div>
<div class="t" style="left:160px;top:361px;width:54px;text-align:right;font-size:13px;line-height:20px;color:#000">36</div>
<div class="t" style="left:220px;top:361px;font-size:13px;line-height:20px;color:#000">VERTS</div>
<div class="t" style="left:3px;top:381px;font-size:13px;line-height:20px;color:#000">Dietrich, Hermann</div>
<div class="t" style="left:160px;top:381px;width:54px;text-align:right;font-size:13px;line-height:20px;color:#000">136</div>
<div class="t" style="left:220px;top:381px;font-size:13px;line-height:20px;color:#000">VERTW</div>
<div class="t" style="left:3px;top:401px;font-size:13px;line-height:20px;color:#000">Durant, Mia</div>
<div class="t" style="left:160px;top:401px;width:54px;text-align:right;font-size:13px;line-height:20px;color:#000">38</div>
<div class="t" style="left:220px;top:401px;font-size:13px;line-height:20px;color:#000">VERT</div>
<div class="t" style="left:3px;top:421px;font-size:13px;line-height:20px;color:#000">Eckert, Brigitte</div>
<div class="t" style="left:160px;top:421px;width:54px;text-align:right;font-size:13px;line-height:20px;color:#000">149</div>
<div class="t" style="left:220px;top:421px;font-size:13px;line-height:20px;color:#000">SEKR</div>
<div class="t" style="left:3px;top:441px;font-size:13px;line-height:20px;color:#000">Ellergren, Lenna</div>
<div class="t" style="left:160px;top:441px;width:54px;text-align:right;font-size:13px;line-height:20px;color:#000">63</div>
<div class="t" style="left:220px;top:441px;font-size:13px;line-height:20px;color:#000">VERT</div>
<div class="t" style="left:3px;top:461px;font-size:13px;line-height:20px;color:#000">Ernst, Kerstin</div>
<div class="t" style="left:160px;top:461px;width:54px;text-align:right;font-size:13px;line-height:20px;color:#000">145</div>
<div class="t" style="left:220px;top:461px;font-size:13px;line-height:20px;color:#000">GEFUE</div>
<div class="t" style="left:3px;top:481px;font-size:13px;line-height:20px;color:#000">Eulenmacher, Maria</div>
<div class="t" style="left:160px;top:481px;width:54px;text-align:right;font-size:13px;line-height:20px;color:#000">59</div>
<div class="t" style="left:220px;top:481px;font-size:13px;line-height:20px;color:#000">EINK</div>
<div class="t" style="left:3px;top:501px;font-size:13px;line-height:20px;color:#000">Fauskind, Olaf</div>
<div class="t" style="left:160px;top:501px;width:54px;text-align:right;font-size:13px;line-height:20px;color:#000">27</div>
<div class="t" style="left:220px;top:501px;font-size:13px;line-height:20px;color:#000">AVOR</div>
<div class="t" style="left:3px;top:521px;font-size:13px;line-height:20px;color:#000">Faust, Alexandra</div>
<div class="t" style="left:160px;top:521px;width:54px;text-align:right;font-size:13px;line-height:20px;color:#000">50</div>
<div class="t" style="left:220px;top:521px;font-size:13px;line-height:20px;color:#000">VERTM</div>
<div class="t" style="left:3px;top:541px;font-size:13px;line-height:20px;color:#000">Fernandez, Carmen</div>
<div class="t" style="left:160px;top:541px;width:54px;text-align:right;font-size:13px;line-height:20px;color:#000">192</div>
<div class="t" style="left:220px;top:541px;font-size:13px;line-height:20px;color:#000">PRESS</div>
<div class="t" style="left:3px;top:561px;font-size:13px;line-height:20px;color:#000">Fochler, Joseph</div>
<div class="t" style="left:160px;top:561px;width:54px;text-align:right;font-size:13px;line-height:20px;color:#000">135</div>
<div class="t" style="left:220px;top:561px;font-size:13px;line-height:20px;color:#000">MARK</div>
<div class="t" style="left:3px;top:581px;font-size:13px;line-height:20px;color:#000">Ford, Michael</div>
<div class="t" style="left:160px;top:581px;width:54px;text-align:right;font-size:13px;line-height:20px;color:#000">35</div>
<div class="t" style="left:220px;top:581px;font-size:13px;line-height:20px;color:#000">PARTB</div>
<div class="t" style="left:3px;top:601px;font-size:13px;line-height:20px;color:#000">Fossard, Marie</div>
<div class="t" style="left:160px;top:601px;width:54px;text-align:right;font-size:13px;line-height:20px;color:#000">198</div>
<div class="t" style="left:220px;top:601px;font-size:13px;line-height:20px;color:#000">VERTW</div>
<div class="t" style="left:3px;top:621px;font-size:13px;line-height:20px;color:#000">Frank, Eva-Maria</div>
<div class="t" style="left:160px;top:621px;width:54px;text-align:right;font-size:13px;line-height:20px;color:#000">128</div>
<div class="t" style="left:220px;top:621px;font-size:13px;line-height:20px;color:#000">VERTO</div>
<div class="t" style="left:3px;top:641px;font-size:13px;line-height:20px;color:#000">Friedensmann, Annika</div>
<div class="t" style="left:160px;top:641px;width:54px;text-align:right;font-size:13px;line-height:20px;color:#000">10</div>
<div class="t" style="left:220px;top:641px;font-size:13px;line-height:20px;color:#000">AUSB</div>
<div class="t" style="left:3px;top:661px;font-size:13px;line-height:20px;color:#000">Garcia, Francisco</div>
<div class="t" style="left:160px;top:661px;width:54px;text-align:right;font-size:13px;line-height:20px;color:#000">191</div>
<div class="t" style="left:220px;top:661px;font-size:13px;line-height:20px;color:#000">VERTO</div>
<div class="t" style="left:3px;top:681px;font-size:13px;line-height:20px;color:#000">Grünkind, Astrid</div>
<div class="t" style="left:160px;top:681px;width:54px;text-align:right;font-size:13px;line-height:20px;color:#000">87</div>
<div class="t" style="left:220px;top:681px;font-size:13px;line-height:20px;color:#000">QM</div>
<div class="t" style="left:3px;top:700px;font-size:13px;line-height:20px;color:#000">Gutmann, Frank</div>
<div class="t" style="left:160px;top:700px;width:54px;text-align:right;font-size:13px;line-height:20px;color:#000">194</div>
<div class="t" style="left:220px;top:700px;font-size:13px;line-height:20px;color:#000">ITTBA</div>
</div>
<div style="left:299px;top:262px;width:16px;height:723px;background:#f0f0f0"></div>
<div style="left:299px;top:302px;width:15px;height:199px;background:#cdcdcd"></div>
<svg style="left:299px;top:283px" width="16" height="12" viewBox="0 0 16 12"><path d="M4.5 7.5 L8 4 L11.5 7.5" fill="none" stroke="#606060" stroke-width="1.8"/></svg>
<svg style="left:299px;top:971px" width="16" height="12" viewBox="0 0 16 12"><path d="M4.5 4 L8 7.5 L11.5 4" fill="none" stroke="#606060" stroke-width="1.8"/></svg>
<div style="left:17px;top:985px;width:282px;height:17px;background:#f0f0f0"></div>
<div style="left:34px;top:986px;width:178px;height:14px;background:#cdcdcd"></div>
<svg style="left:19px;top:987px" width="12" height="13" viewBox="0 0 12 13"><path d="M7.5 3 L4 6.5 L7.5 10" fill="none" stroke="#606060" stroke-width="1.8"/></svg>
<svg style="left:284px;top:987px" width="12" height="13" viewBox="0 0 12 13"><path d="M4 3 L7.5 6.5 L4 10" fill="none" stroke="#606060" stroke-width="1.8"/></svg>
<div class="t" style="left:320px;top:155px;font-size:14px;line-height:18px;letter-spacing:0.09px;color:#3c68cc">Buchungskorrektur: 158, Ackermann, Uwe</div>
<div class="t" style="left:597px;top:155px;font-size:14px;line-height:18px;letter-spacing:0.11px;color:#3c68cc">29. Oktober - 3. Dezember 2014</div>
<div style="left:316px;top:176px;width:1286px;height:827px;border:1px solid #7b8189;background:#f0f0f0"></div>
<div style="left:317px;top:177px;width:30px;height:24px;background:#e1e1e1;border-top:1px solid #fff;border-left:1px solid #fff;box-shadow:inset -1px -1px 0 #a0a0a0;border-right:1px solid #696969;border-bottom:1px solid #696969"></div>
<div class="t" style="left:318px;top:180px;width:29px;text-align:center;font-size:13px;line-height:20px">AM</div>
<div style="left:347px;top:177px;width:30px;height:24px;background:#e1e1e1;border-top:1px solid #fff;border-left:1px solid #fff;box-shadow:inset -1px -1px 0 #a0a0a0;border-right:1px solid #696969;border-bottom:1px solid #696969"></div>
<div class="t" style="left:348px;top:180px;width:29px;text-align:center;font-size:13px;line-height:20px">Tg</div>
<div style="left:377px;top:177px;width:78px;height:24px;background:#e1e1e1;border-top:1px solid #fff;border-left:1px solid #fff;box-shadow:inset -1px -1px 0 #a0a0a0;border-right:1px solid #696969;border-bottom:1px solid #696969"></div>
<div class="t" style="left:378px;top:180px;width:77px;text-align:center;font-size:13px;line-height:20px">Datum</div>
<div style="left:455px;top:177px;width:18px;height:24px;background:#e1e1e1;border-top:1px solid #fff;border-left:1px solid #fff;box-shadow:inset -1px -1px 0 #a0a0a0;border-right:1px solid #696969;border-bottom:1px solid #696969"></div>
<div style="left:473px;top:177px;width:18px;height:24px;background:#e1e1e1;border-top:1px solid #fff;border-left:1px solid #fff;box-shadow:inset -1px -1px 0 #a0a0a0;border-right:1px solid #696969;border-bottom:1px solid #696969"></div>
<div style="left:491px;top:177px;width:36px;height:24px;background:#e1e1e1;border-top:1px solid #fff;border-left:1px solid #fff;box-shadow:inset -1px -1px 0 #a0a0a0;border-right:1px solid #696969;border-bottom:1px solid #696969"></div>
<div class="t" style="left:493px;top:180px;width:35px;text-align:center;font-size:13px;line-height:20px">Plan</div>
<div style="left:527px;top:177px;width:24px;height:24px;background:#e1e1e1;border-top:1px solid #fff;border-left:1px solid #fff;box-shadow:inset -1px -1px 0 #a0a0a0;border-right:1px solid #696969;border-bottom:1px solid #696969"></div>
<div style="left:551px;top:177px;width:18px;height:24px;background:#e1e1e1;border-top:1px solid #fff;border-left:1px solid #fff;box-shadow:inset -1px -1px 0 #a0a0a0;border-right:1px solid #696969;border-bottom:1px solid #696969"></div>
<div style="left:569px;top:177px;width:18px;height:24px;background:#e1e1e1;border-top:1px solid #fff;border-left:1px solid #fff;box-shadow:inset -1px -1px 0 #a0a0a0;border-right:1px solid #696969;border-bottom:1px solid #696969"></div>
<div style="left:587px;top:177px;width:18px;height:24px;background:#e1e1e1;border-top:1px solid #fff;border-left:1px solid #fff;box-shadow:inset -1px -1px 0 #a0a0a0;border-right:1px solid #696969;border-bottom:1px solid #696969"></div>
<div style="left:605px;top:177px;width:18px;height:24px;background:#e1e1e1;border-top:1px solid #fff;border-left:1px solid #fff;box-shadow:inset -1px -1px 0 #a0a0a0;border-right:1px solid #696969;border-bottom:1px solid #696969"></div>
<div style="left:623px;top:177px;width:18px;height:24px;background:#e1e1e1;border-top:1px solid #fff;border-left:1px solid #fff;box-shadow:inset -1px -1px 0 #a0a0a0;border-right:1px solid #696969;border-bottom:1px solid #696969"></div>
<div style="left:641px;top:177px;width:18px;height:24px;background:#e1e1e1;border-top:1px solid #fff;border-left:1px solid #fff;box-shadow:inset -1px -1px 0 #a0a0a0;border-right:1px solid #696969;border-bottom:1px solid #696969"></div>
<div style="left:659px;top:177px;width:18px;height:24px;background:#e1e1e1;border-top:1px solid #fff;border-left:1px solid #fff;box-shadow:inset -1px -1px 0 #a0a0a0;border-right:1px solid #696969;border-bottom:1px solid #696969"></div>
<div style="left:677px;top:177px;width:2px;height:825px;background:#7b8189"></div>
<div style="left:317px;top:201px;width:360px;height:784px;overflow:hidden">
<div style="left:0;top:0px;width:360px;height:21px;background:#fafafa"></div>
<div style="left:0;top:0px;width:30px;height:21px;background:#80b0ff"></div>
<div style="left:0;top:21px;width:360px;height:1px;background:#808080"></div>
<div class="t" style="left:0.7px;top:0px;width:30px;text-align:center;font-size:13px;line-height:21px;color:#000">Okt</div>
<div class="t" style="left:30px;top:0px;width:30px;text-align:center;font-size:13px;line-height:21px;color:#000">Mi</div>
<div class="t" style="left:60px;top:0px;width:78px;text-align:center;font-size:13px;line-height:21px;color:#000">29.10.2014</div>
<div style="left:0;top:22px;width:360px;height:21px;background:#fafafa"></div>
<div style="left:0;top:22px;width:30px;height:21px;background:#80b0ff"></div>
<div style="left:0;top:43px;width:360px;height:1px;background:#808080"></div>
<div class="t" style="left:0.7px;top:22px;width:30px;text-align:center;font-size:13px;line-height:21px;color:#000">Okt</div>
<div class="t" style="left:30px;top:22px;width:30px;text-align:center;font-size:13px;line-height:21px;color:#000">Do</div>
<div class="t" style="left:60px;top:22px;width:78px;text-align:center;font-size:13px;line-height:21px;color:#000">30.10.2014</div>
<div style="left:0;top:44px;width:360px;height:21px;background:#fafafa"></div>
<div style="left:0;top:44px;width:30px;height:21px;background:#80b0ff"></div>
<div style="left:0;top:65px;width:360px;height:1px;background:#808080"></div>
<div class="t" style="left:0.7px;top:44px;width:30px;text-align:center;font-size:13px;line-height:21px;color:#000">Okt</div>
<div class="t" style="left:30px;top:44px;width:30px;text-align:center;font-size:13px;line-height:21px;color:#000">Fr</div>
<div class="t" style="left:60px;top:44px;width:78px;text-align:center;font-size:13px;line-height:21px;color:#000">31.10.2014</div>
<div style="left:0;top:66px;width:360px;height:21px;background:#b2292b"></div>
<div style="left:0;top:66px;width:30px;height:21px;background:#d4d4d4"></div>
<div style="left:0;top:87px;width:360px;height:1px;background:#808080"></div>
<div class="t" style="left:0.7px;top:66px;width:30px;text-align:center;font-size:13px;line-height:21px;color:#000">Nov</div>
<div class="t" style="left:30px;top:66px;width:30px;text-align:center;font-size:13px;line-height:21px;color:#000">S1</div>
<div class="t" style="left:60px;top:66px;width:78px;text-align:center;font-size:13px;line-height:21px;color:#000">01.11.2014</div>
<div style="left:0;top:88px;width:360px;height:21px;background:#bad6e4"></div>
<div style="left:0;top:88px;width:30px;height:21px;background:#d4d4d4"></div>
<div style="left:0;top:109px;width:360px;height:1px;background:#808080"></div>
<div class="t" style="left:0.7px;top:88px;width:30px;text-align:center;font-size:13px;line-height:21px;color:#000">Nov</div>
<div class="t" style="left:30px;top:88px;width:30px;text-align:center;font-size:13px;line-height:21px;color:#000">So</div>
<div class="t" style="left:60px;top:88px;width:78px;text-align:center;font-size:13px;line-height:21px;color:#000">02.11.2014</div>
<div style="left:0;top:110px;width:360px;height:21px;background:#fafafa"></div>
<div style="left:0;top:110px;width:30px;height:21px;background:#d4d4d4"></div>
<div style="left:0;top:131px;width:360px;height:1px;background:#808080"></div>
<div class="t" style="left:0.7px;top:110px;width:30px;text-align:center;font-size:13px;line-height:21px;color:#000">Nov</div>
<div class="t" style="left:30px;top:110px;width:30px;text-align:center;font-size:13px;line-height:21px;color:#000">Mo</div>
<div class="t" style="left:60px;top:110px;width:78px;text-align:center;font-size:13px;line-height:21px;color:#000">03.11.2014</div>
<div style="left:0;top:132px;width:360px;height:21px;background:#fafafa"></div>
<div style="left:0;top:132px;width:30px;height:21px;background:#d4d4d4"></div>
<div style="left:0;top:153px;width:360px;height:1px;background:#808080"></div>
<div class="t" style="left:0.7px;top:132px;width:30px;text-align:center;font-size:13px;line-height:21px;color:#000">Nov</div>
<div class="t" style="left:30px;top:132px;width:30px;text-align:center;font-size:13px;line-height:21px;color:#000">Di</div>
<div class="t" style="left:60px;top:132px;width:78px;text-align:center;font-size:13px;line-height:21px;color:#000">04.11.2014</div>
<div style="left:0;top:154px;width:360px;height:21px;background:#fafafa"></div>
<div style="left:0;top:154px;width:30px;height:21px;background:#d4d4d4"></div>
<div style="left:0;top:175px;width:360px;height:1px;background:#808080"></div>
<div class="t" style="left:0.7px;top:154px;width:30px;text-align:center;font-size:13px;line-height:21px;color:#000">Nov</div>
<div class="t" style="left:30px;top:154px;width:30px;text-align:center;font-size:13px;line-height:21px;color:#000">Mi</div>
<div class="t" style="left:60px;top:154px;width:78px;text-align:center;font-size:13px;line-height:21px;color:#000">05.11.2014</div>
<div style="left:0;top:176px;width:360px;height:21px;background:#fafafa"></div>
<div style="left:0;top:176px;width:30px;height:21px;background:#d4d4d4"></div>
<div style="left:0;top:197px;width:360px;height:1px;background:#808080"></div>
<div class="t" style="left:0.7px;top:176px;width:30px;text-align:center;font-size:13px;line-height:21px;color:#000">Nov</div>
<div class="t" style="left:30px;top:176px;width:30px;text-align:center;font-size:13px;line-height:21px;color:#000">Do</div>
<div class="t" style="left:60px;top:176px;width:78px;text-align:center;font-size:13px;line-height:21px;color:#000">06.11.2014</div>
<div style="left:0;top:198px;width:360px;height:21px;background:#fafafa"></div>
<div style="left:0;top:198px;width:30px;height:21px;background:#d4d4d4"></div>
<div style="left:0;top:219px;width:360px;height:1px;background:#808080"></div>
<div class="t" style="left:0.7px;top:198px;width:30px;text-align:center;font-size:13px;line-height:21px;color:#000">Nov</div>
<div class="t" style="left:30px;top:198px;width:30px;text-align:center;font-size:13px;line-height:21px;color:#000">Fr</div>
<div class="t" style="left:60px;top:198px;width:78px;text-align:center;font-size:13px;line-height:21px;color:#000">07.11.2014</div>
<div style="left:0;top:220px;width:360px;height:21px;background:#d0e4f0"></div>
<div style="left:0;top:220px;width:30px;height:21px;background:#d4d4d4"></div>
<div style="left:0;top:241px;width:360px;height:1px;background:#808080"></div>
<div class="t" style="left:0.7px;top:220px;width:30px;text-align:center;font-size:13px;line-height:21px;color:#000">Nov</div>
<div class="t" style="left:30px;top:220px;width:30px;text-align:center;font-size:13px;line-height:21px;color:#000">Sa</div>
<div class="t" style="left:60px;top:220px;width:78px;text-align:center;font-size:13px;line-height:21px;color:#000">08.11.2014</div>
<div style="left:0;top:242px;width:360px;height:21px;background:#bad6e4"></div>
<div style="left:0;top:242px;width:30px;height:21px;background:#d4d4d4"></div>
<div style="left:0;top:263px;width:360px;height:1px;background:#808080"></div>
<div class="t" style="left:0.7px;top:242px;width:30px;text-align:center;font-size:13px;line-height:21px;color:#000">Nov</div>
<div class="t" style="left:30px;top:242px;width:30px;text-align:center;font-size:13px;line-height:21px;color:#000">So</div>
<div class="t" style="left:60px;top:242px;width:78px;text-align:center;font-size:13px;line-height:21px;color:#000">09.11.2014</div>
<div style="left:0;top:264px;width:360px;height:21px;background:#fafafa"></div>
<div style="left:0;top:264px;width:30px;height:21px;background:#d4d4d4"></div>
<div style="left:0;top:285px;width:360px;height:1px;background:#808080"></div>
<div class="t" style="left:0.7px;top:264px;width:30px;text-align:center;font-size:13px;line-height:21px;color:#000">Nov</div>
<div class="t" style="left:30px;top:264px;width:30px;text-align:center;font-size:13px;line-height:21px;color:#000">Mo</div>
<div class="t" style="left:60px;top:264px;width:78px;text-align:center;font-size:13px;line-height:21px;color:#000">10.11.2014</div>
<div style="left:0;top:286px;width:360px;height:21px;background:#fafafa"></div>
<div style="left:0;top:286px;width:30px;height:21px;background:#d4d4d4"></div>
<div style="left:0;top:307px;width:360px;height:1px;background:#808080"></div>
<div class="t" style="left:0.7px;top:286px;width:30px;text-align:center;font-size:13px;line-height:21px;color:#000">Nov</div>
<div class="t" style="left:30px;top:286px;width:30px;text-align:center;font-size:13px;line-height:21px;color:#000">Di</div>
<div class="t" style="left:60px;top:286px;width:78px;text-align:center;font-size:13px;line-height:21px;color:#000">11.11.2014</div>
<div style="left:0;top:308px;width:360px;height:21px;background:#0078d7"></div>
<div style="left:0;top:308px;width:30px;height:21px;background:#0078d7"></div>
<div style="left:0;top:329px;width:360px;height:1px;background:#808080"></div>
<div class="t" style="left:0.7px;top:308px;width:30px;text-align:center;font-size:13px;line-height:21px;color:#d4d4d4">Nov</div>
<div class="t" style="left:30px;top:308px;width:30px;text-align:center;font-size:13px;line-height:21px;color:#fff">Mi</div>
<div class="t" style="left:60px;top:308px;width:78px;text-align:center;font-size:13px;line-height:21px;color:#fff">12.11.2014</div>
<div style="left:0;top:330px;width:360px;height:21px;background:#fafafa"></div>
<div style="left:0;top:330px;width:30px;height:21px;background:#d4d4d4"></div>
<div style="left:0;top:351px;width:360px;height:1px;background:#808080"></div>
<div class="t" style="left:0.7px;top:330px;width:30px;text-align:center;font-size:13px;line-height:21px;color:#000">Nov</div>
<div class="t" style="left:30px;top:330px;width:30px;text-align:center;font-size:13px;line-height:21px;color:#000">Do</div>
<div class="t" style="left:60px;top:330px;width:78px;text-align:center;font-size:13px;line-height:21px;color:#000">13.11.2014</div>
<div style="left:0;top:352px;width:360px;height:21px;background:#fafafa"></div>
<div style="left:0;top:352px;width:30px;height:21px;background:#d4d4d4"></div>
<div style="left:0;top:373px;width:360px;height:1px;background:#808080"></div>
<div class="t" style="left:0.7px;top:352px;width:30px;text-align:center;font-size:13px;line-height:21px;color:#000">Nov</div>
<div class="t" style="left:30px;top:352px;width:30px;text-align:center;font-size:13px;line-height:21px;color:#000">Fr</div>
<div class="t" style="left:60px;top:352px;width:78px;text-align:center;font-size:13px;line-height:21px;color:#000">14.11.2014</div>
<div style="left:0;top:374px;width:360px;height:21px;background:#d0e4f0"></div>
<div style="left:0;top:374px;width:30px;height:21px;background:#d4d4d4"></div>
<div style="left:0;top:395px;width:360px;height:1px;background:#808080"></div>
<div class="t" style="left:0.7px;top:374px;width:30px;text-align:center;font-size:13px;line-height:21px;color:#000">Nov</div>
<div class="t" style="left:30px;top:374px;width:30px;text-align:center;font-size:13px;line-height:21px;color:#000">Sa</div>
<div class="t" style="left:60px;top:374px;width:78px;text-align:center;font-size:13px;line-height:21px;color:#000">15.11.2014</div>
<div style="left:0;top:396px;width:360px;height:21px;background:#bad6e4"></div>
<div style="left:0;top:396px;width:30px;height:21px;background:#d4d4d4"></div>
<div style="left:0;top:417px;width:360px;height:1px;background:#808080"></div>
<div class="t" style="left:0.7px;top:396px;width:30px;text-align:center;font-size:13px;line-height:21px;color:#000">Nov</div>
<div class="t" style="left:30px;top:396px;width:30px;text-align:center;font-size:13px;line-height:21px;color:#000">So</div>
<div class="t" style="left:60px;top:396px;width:78px;text-align:center;font-size:13px;line-height:21px;color:#000">16.11.2014</div>
<div style="left:0;top:418px;width:360px;height:21px;background:#fafafa"></div>
<div style="left:0;top:418px;width:30px;height:21px;background:#d4d4d4"></div>
<div style="left:0;top:439px;width:360px;height:1px;background:#808080"></div>
<div class="t" style="left:0.7px;top:418px;width:30px;text-align:center;font-size:13px;line-height:21px;color:#000">Nov</div>
<div class="t" style="left:30px;top:418px;width:30px;text-align:center;font-size:13px;line-height:21px;color:#000">Mo</div>
<div class="t" style="left:60px;top:418px;width:78px;text-align:center;font-size:13px;line-height:21px;color:#000">17.11.2014</div>
<div style="left:0;top:440px;width:360px;height:21px;background:#fafafa"></div>
<div style="left:0;top:440px;width:30px;height:21px;background:#d4d4d4"></div>
<div style="left:0;top:461px;width:360px;height:1px;background:#808080"></div>
<div class="t" style="left:0.7px;top:440px;width:30px;text-align:center;font-size:13px;line-height:21px;color:#000">Nov</div>
<div class="t" style="left:30px;top:440px;width:30px;text-align:center;font-size:13px;line-height:21px;color:#000">Di</div>
<div class="t" style="left:60px;top:440px;width:78px;text-align:center;font-size:13px;line-height:21px;color:#000">18.11.2014</div>
<div style="left:0;top:462px;width:360px;height:21px;background:#fafafa"></div>
<div style="left:0;top:462px;width:30px;height:21px;background:#d4d4d4"></div>
<div style="left:0;top:483px;width:360px;height:1px;background:#808080"></div>
<div class="t" style="left:0.7px;top:462px;width:30px;text-align:center;font-size:13px;line-height:21px;color:#000">Nov</div>
<div class="t" style="left:30px;top:462px;width:30px;text-align:center;font-size:13px;line-height:21px;color:#000">Mi</div>
<div class="t" style="left:60px;top:462px;width:78px;text-align:center;font-size:13px;line-height:21px;color:#000">19.11.2014</div>
<div style="left:0;top:484px;width:360px;height:21px;background:#fafafa"></div>
<div style="left:0;top:484px;width:30px;height:21px;background:#d4d4d4"></div>
<div style="left:0;top:505px;width:360px;height:1px;background:#808080"></div>
<div class="t" style="left:0.7px;top:484px;width:30px;text-align:center;font-size:13px;line-height:21px;color:#000">Nov</div>
<div class="t" style="left:30px;top:484px;width:30px;text-align:center;font-size:13px;line-height:21px;color:#000">Do</div>
<div class="t" style="left:60px;top:484px;width:78px;text-align:center;font-size:13px;line-height:21px;color:#000">20.11.2014</div>
<div style="left:0;top:506px;width:360px;height:21px;background:#fafafa"></div>
<div style="left:0;top:506px;width:30px;height:21px;background:#d4d4d4"></div>
<div style="left:0;top:527px;width:360px;height:1px;background:#808080"></div>
<div class="t" style="left:0.7px;top:506px;width:30px;text-align:center;font-size:13px;line-height:21px;color:#000">Nov</div>
<div class="t" style="left:30px;top:506px;width:30px;text-align:center;font-size:13px;line-height:21px;color:#000">Fr</div>
<div class="t" style="left:60px;top:506px;width:78px;text-align:center;font-size:13px;line-height:21px;color:#000">21.11.2014</div>
<div style="left:0;top:528px;width:360px;height:21px;background:#d0e4f0"></div>
<div style="left:0;top:528px;width:30px;height:21px;background:#d4d4d4"></div>
<div style="left:0;top:549px;width:360px;height:1px;background:#808080"></div>
<div class="t" style="left:0.7px;top:528px;width:30px;text-align:center;font-size:13px;line-height:21px;color:#000">Nov</div>
<div class="t" style="left:30px;top:528px;width:30px;text-align:center;font-size:13px;line-height:21px;color:#000">Sa</div>
<div class="t" style="left:60px;top:528px;width:78px;text-align:center;font-size:13px;line-height:21px;color:#000">22.11.2014</div>
<div style="left:0;top:550px;width:360px;height:21px;background:#bad6e4"></div>
<div style="left:0;top:550px;width:30px;height:21px;background:#d4d4d4"></div>
<div style="left:0;top:571px;width:360px;height:1px;background:#808080"></div>
<div class="t" style="left:0.7px;top:550px;width:30px;text-align:center;font-size:13px;line-height:21px;color:#000">Nov</div>
<div class="t" style="left:30px;top:550px;width:30px;text-align:center;font-size:13px;line-height:21px;color:#000">So</div>
<div class="t" style="left:60px;top:550px;width:78px;text-align:center;font-size:13px;line-height:21px;color:#000">23.11.2014</div>
<div style="left:0;top:572px;width:360px;height:21px;background:#fafafa"></div>
<div style="left:0;top:572px;width:30px;height:21px;background:#d4d4d4"></div>
<div style="left:0;top:593px;width:360px;height:1px;background:#808080"></div>
<div class="t" style="left:0.7px;top:572px;width:30px;text-align:center;font-size:13px;line-height:21px;color:#000">Nov</div>
<div class="t" style="left:30px;top:572px;width:30px;text-align:center;font-size:13px;line-height:21px;color:#000">Mo</div>
<div class="t" style="left:60px;top:572px;width:78px;text-align:center;font-size:13px;line-height:21px;color:#000">24.11.2014</div>
<div style="left:0;top:594px;width:360px;height:21px;background:#fafafa"></div>
<div style="left:0;top:594px;width:30px;height:21px;background:#d4d4d4"></div>
<div style="left:0;top:615px;width:360px;height:1px;background:#808080"></div>
<div class="t" style="left:0.7px;top:594px;width:30px;text-align:center;font-size:13px;line-height:21px;color:#000">Nov</div>
<div class="t" style="left:30px;top:594px;width:30px;text-align:center;font-size:13px;line-height:21px;color:#000">Di</div>
<div class="t" style="left:60px;top:594px;width:78px;text-align:center;font-size:13px;line-height:21px;color:#000">25.11.2014</div>
<div style="left:0;top:616px;width:360px;height:21px;background:#fafafa"></div>
<div style="left:0;top:616px;width:30px;height:21px;background:#d4d4d4"></div>
<div style="left:0;top:637px;width:360px;height:1px;background:#808080"></div>
<div class="t" style="left:0.7px;top:616px;width:30px;text-align:center;font-size:13px;line-height:21px;color:#000">Nov</div>
<div class="t" style="left:30px;top:616px;width:30px;text-align:center;font-size:13px;line-height:21px;color:#000">Mi</div>
<div class="t" style="left:60px;top:616px;width:78px;text-align:center;font-size:13px;line-height:21px;color:#000">26.11.2014</div>
<div style="left:0;top:638px;width:360px;height:21px;background:#fafafa"></div>
<div style="left:0;top:638px;width:30px;height:21px;background:#d4d4d4"></div>
<div style="left:0;top:659px;width:360px;height:1px;background:#808080"></div>
<div class="t" style="left:0.7px;top:638px;width:30px;text-align:center;font-size:13px;line-height:21px;color:#000">Nov</div>
<div class="t" style="left:30px;top:638px;width:30px;text-align:center;font-size:13px;line-height:21px;color:#000">Do</div>
<div class="t" style="left:60px;top:638px;width:78px;text-align:center;font-size:13px;line-height:21px;color:#000">27.11.2014</div>
<div style="left:0;top:660px;width:360px;height:21px;background:#fafafa"></div>
<div style="left:0;top:660px;width:30px;height:21px;background:#d4d4d4"></div>
<div style="left:0;top:681px;width:360px;height:1px;background:#808080"></div>
<div class="t" style="left:0.7px;top:660px;width:30px;text-align:center;font-size:13px;line-height:21px;color:#000">Nov</div>
<div class="t" style="left:30px;top:660px;width:30px;text-align:center;font-size:13px;line-height:21px;color:#000">Fr</div>
<div class="t" style="left:60px;top:660px;width:78px;text-align:center;font-size:13px;line-height:21px;color:#000">28.11.2014</div>
<div style="left:0;top:682px;width:360px;height:21px;background:#d0e4f0"></div>
<div style="left:0;top:682px;width:30px;height:21px;background:#d4d4d4"></div>
<div style="left:0;top:703px;width:360px;height:1px;background:#808080"></div>
<div class="t" style="left:0.7px;top:682px;width:30px;text-align:center;font-size:13px;line-height:21px;color:#000">Nov</div>
<div class="t" style="left:30px;top:682px;width:30px;text-align:center;font-size:13px;line-height:21px;color:#000">Sa</div>
<div class="t" style="left:60px;top:682px;width:78px;text-align:center;font-size:13px;line-height:21px;color:#000">29.11.2014</div>
<div style="left:0;top:704px;width:360px;height:21px;background:#bad6e4"></div>
<div style="left:0;top:704px;width:30px;height:21px;background:#d4d4d4"></div>
<div style="left:0;top:725px;width:360px;height:1px;background:#808080"></div>
<div class="t" style="left:0.7px;top:704px;width:30px;text-align:center;font-size:13px;line-height:21px;color:#000">Nov</div>
<div class="t" style="left:30px;top:704px;width:30px;text-align:center;font-size:13px;line-height:21px;color:#000">So</div>
<div class="t" style="left:60px;top:704px;width:78px;text-align:center;font-size:13px;line-height:21px;color:#000">30.11.2014</div>
<div style="left:0;top:726px;width:360px;height:21px;background:#fafafa"></div>
<div style="left:0;top:726px;width:30px;height:21px;background:#80b0ff"></div>
<div style="left:0;top:747px;width:360px;height:1px;background:#808080"></div>
<div class="t" style="left:0.7px;top:726px;width:30px;text-align:center;font-size:13px;line-height:21px;color:#000">Dez</div>
<div class="t" style="left:30px;top:726px;width:30px;text-align:center;font-size:13px;line-height:21px;color:#000">Mo</div>
<div class="t" style="left:60px;top:726px;width:78px;text-align:center;font-size:13px;line-height:21px;color:#000">01.12.2014</div>
<div style="left:0;top:748px;width:360px;height:21px;background:#fafafa"></div>
<div style="left:0;top:748px;width:30px;height:21px;background:#80b0ff"></div>
<div style="left:0;top:769px;width:360px;height:1px;background:#808080"></div>
<div class="t" style="left:0.7px;top:748px;width:30px;text-align:center;font-size:13px;line-height:21px;color:#000">Dez</div>
<div class="t" style="left:30px;top:748px;width:30px;text-align:center;font-size:13px;line-height:21px;color:#000">Di</div>
<div class="t" style="left:60px;top:748px;width:78px;text-align:center;font-size:13px;line-height:21px;color:#000">02.12.2014</div>
<div style="left:0;top:770px;width:360px;height:21px;background:#fafafa"></div>
<div style="left:0;top:770px;width:30px;height:21px;background:#80b0ff"></div>
<div style="left:0;top:791px;width:360px;height:1px;background:#808080"></div>
<div class="t" style="left:0.7px;top:770px;width:30px;text-align:center;font-size:13px;line-height:21px;color:#000">Dez</div>
<div class="t" style="left:30px;top:770px;width:30px;text-align:center;font-size:13px;line-height:21px;color:#000">Mi</div>
<div class="t" style="left:60px;top:770px;width:78px;text-align:center;font-size:13px;line-height:21px;color:#000">03.12.2014</div>
</div>
<div style="left:679px;top:177px;width:906px;height:24px;overflow:hidden">
<div style="left:0px;top:0;width:42px;height:24px;background:#e1e1e1;border-top:1px solid #fff;border-left:1px solid #fff;box-shadow:inset -1px -1px 0 #a0a0a0;border-right:1px solid #696969;border-bottom:1px solid #696969"></div>
<div style="left:42px;top:0;width:30px;height:24px;background:#e1e1e1;border-top:1px solid #fff;border-left:1px solid #fff;box-shadow:inset -1px -1px 0 #a0a0a0;border-right:1px solid #696969;border-bottom:1px solid #696969"></div>
<div class="t" style="left:0px;top:3px;width:39px;text-align:right;font-size:13px;line-height:20px">1</div>
<div style="left:72px;top:0;width:42px;height:24px;background:#e1e1e1;border-top:1px solid #fff;border-left:1px solid #fff;box-shadow:inset -1px -1px 0 #a0a0a0;border-right:1px solid #696969;border-bottom:1px solid #696969"></div>
<div style="left:114px;top:0;width:30px;height:24px;background:#e1e1e1;border-top:1px solid #fff;border-left:1px solid #fff;box-shadow:inset -1px -1px 0 #a0a0a0;border-right:1px solid #696969;border-bottom:1px solid #696969"></div>
<div class="t" style="left:72px;top:3px;width:39px;text-align:right;font-size:13px;line-height:20px">2</div>
<div style="left:144px;top:0;width:42px;height:24px;background:#e1e1e1;border-top:1px solid #fff;border-left:1px solid #fff;box-shadow:inset -1px -1px 0 #a0a0a0;border-right:1px solid #696969;border-bottom:1px solid #696969"></div>
<div style="left:186px;top:0;width:30px;height:24px;background:#e1e1e1;border-top:1px solid #fff;border-left:1px solid #fff;box-shadow:inset -1px -1px 0 #a0a0a0;border-right:1px solid #696969;border-bottom:1px solid #696969"></div>
<div class="t" style="left:144px;top:3px;width:39px;text-align:right;font-size:13px;line-height:20px">3</div>
<div style="left:216px;top:0;width:42px;height:24px;background:#e1e1e1;border-top:1px solid #fff;border-left:1px solid #fff;box-shadow:inset -1px -1px 0 #a0a0a0;border-right:1px solid #696969;border-bottom:1px solid #696969"></div>
<div style="left:258px;top:0;width:30px;height:24px;background:#e1e1e1;border-top:1px solid #fff;border-left:1px solid #fff;box-shadow:inset -1px -1px 0 #a0a0a0;border-right:1px solid #696969;border-bottom:1px solid #696969"></div>
<div class="t" style="left:216px;top:3px;width:39px;text-align:right;font-size:13px;line-height:20px">4</div>
<div style="left:288px;top:0;width:42px;height:24px;background:#e1e1e1;border-top:1px solid #fff;border-left:1px solid #fff;box-shadow:inset -1px -1px 0 #a0a0a0;border-right:1px solid #696969;border-bottom:1px solid #696969"></div>
<div style="left:330px;top:0;width:30px;height:24px;background:#e1e1e1;border-top:1px solid #fff;border-left:1px solid #fff;box-shadow:inset -1px -1px 0 #a0a0a0;border-right:1px solid #696969;border-bottom:1px solid #696969"></div>
<div class="t" style="left:288px;top:3px;width:39px;text-align:right;font-size:13px;line-height:20px">5</div>
<div style="left:360px;top:0;width:42px;height:24px;background:#e1e1e1;border-top:1px solid #fff;border-left:1px solid #fff;box-shadow:inset -1px -1px 0 #a0a0a0;border-right:1px solid #696969;border-bottom:1px solid #696969"></div>
<div style="left:402px;top:0;width:30px;height:24px;background:#e1e1e1;border-top:1px solid #fff;border-left:1px solid #fff;box-shadow:inset -1px -1px 0 #a0a0a0;border-right:1px solid #696969;border-bottom:1px solid #696969"></div>
<div class="t" style="left:360px;top:3px;width:39px;text-align:right;font-size:13px;line-height:20px">6</div>
<div style="left:432px;top:0;width:42px;height:24px;background:#e1e1e1;border-top:1px solid #fff;border-left:1px solid #fff;box-shadow:inset -1px -1px 0 #a0a0a0;border-right:1px solid #696969;border-bottom:1px solid #696969"></div>
<div style="left:474px;top:0;width:30px;height:24px;background:#e1e1e1;border-top:1px solid #fff;border-left:1px solid #fff;box-shadow:inset -1px -1px 0 #a0a0a0;border-right:1px solid #696969;border-bottom:1px solid #696969"></div>
<div class="t" style="left:432px;top:3px;width:39px;text-align:right;font-size:13px;line-height:20px">7</div>
<div style="left:504px;top:0;width:42px;height:24px;background:#e1e1e1;border-top:1px solid #fff;border-left:1px solid #fff;box-shadow:inset -1px -1px 0 #a0a0a0;border-right:1px solid #696969;border-bottom:1px solid #696969"></div>
<div style="left:546px;top:0;width:30px;height:24px;background:#e1e1e1;border-top:1px solid #fff;border-left:1px solid #fff;box-shadow:inset -1px -1px 0 #a0a0a0;border-right:1px solid #696969;border-bottom:1px solid #696969"></div>
<div class="t" style="left:504px;top:3px;width:39px;text-align:right;font-size:13px;line-height:20px">8</div>
<div style="left:576px;top:0;width:42px;height:24px;background:#e1e1e1;border-top:1px solid #fff;border-left:1px solid #fff;box-shadow:inset -1px -1px 0 #a0a0a0;border-right:1px solid #696969;border-bottom:1px solid #696969"></div>
<div style="left:618px;top:0;width:30px;height:24px;background:#e1e1e1;border-top:1px solid #fff;border-left:1px solid #fff;box-shadow:inset -1px -1px 0 #a0a0a0;border-right:1px solid #696969;border-bottom:1px solid #696969"></div>
<div class="t" style="left:576px;top:3px;width:39px;text-align:right;font-size:13px;line-height:20px">9</div>
<div style="left:648px;top:0;width:42px;height:24px;background:#e1e1e1;border-top:1px solid #fff;border-left:1px solid #fff;box-shadow:inset -1px -1px 0 #a0a0a0;border-right:1px solid #696969;border-bottom:1px solid #696969"></div>
<div style="left:690px;top:0;width:30px;height:24px;background:#e1e1e1;border-top:1px solid #fff;border-left:1px solid #fff;box-shadow:inset -1px -1px 0 #a0a0a0;border-right:1px solid #696969;border-bottom:1px solid #696969"></div>
<div class="t" style="left:648px;top:3px;width:39px;text-align:right;font-size:13px;line-height:20px">10</div>
<div style="left:720px;top:0;width:42px;height:24px;background:#e1e1e1;border-top:1px solid #fff;border-left:1px solid #fff;box-shadow:inset -1px -1px 0 #a0a0a0;border-right:1px solid #696969;border-bottom:1px solid #696969"></div>
<div style="left:762px;top:0;width:30px;height:24px;background:#e1e1e1;border-top:1px solid #fff;border-left:1px solid #fff;box-shadow:inset -1px -1px 0 #a0a0a0;border-right:1px solid #696969;border-bottom:1px solid #696969"></div>
<div class="t" style="left:720px;top:3px;width:39px;text-align:right;font-size:13px;line-height:20px">11</div>
<div style="left:792px;top:0;width:42px;height:24px;background:#e1e1e1;border-top:1px solid #fff;border-left:1px solid #fff;box-shadow:inset -1px -1px 0 #a0a0a0;border-right:1px solid #696969;border-bottom:1px solid #696969"></div>
<div style="left:834px;top:0;width:30px;height:24px;background:#e1e1e1;border-top:1px solid #fff;border-left:1px solid #fff;box-shadow:inset -1px -1px 0 #a0a0a0;border-right:1px solid #696969;border-bottom:1px solid #696969"></div>
<div class="t" style="left:792px;top:3px;width:39px;text-align:right;font-size:13px;line-height:20px">12</div>
<div style="left:864px;top:0;width:42px;height:24px;background:#e1e1e1;border-top:1px solid #fff;border-left:1px solid #fff;box-shadow:inset -1px -1px 0 #a0a0a0;border-right:1px solid #696969;border-bottom:1px solid #696969"></div>
<div style="left:906px;top:0;width:30px;height:24px;background:#e1e1e1;border-top:1px solid #fff;border-left:1px solid #fff;box-shadow:inset -1px -1px 0 #a0a0a0;border-right:1px solid #696969;border-bottom:1px solid #696969"></div>
<div class="t" style="left:864px;top:3px;width:39px;text-align:right;font-size:13px;line-height:20px">13</div>
</div>
<div style="left:679px;top:201px;width:906px;height:784px;overflow:hidden">
<div style="left:0px;top:0px;width:72px;height:21px;background:#e3e3e3"></div>
<div style="left:72px;top:0px;width:72px;height:21px;background:#fafafa"></div>
<div style="left:144px;top:0px;width:72px;height:21px;background:#e3e3e3"></div>
<div style="left:216px;top:0px;width:72px;height:21px;background:#fafafa"></div>
<div style="left:288px;top:0px;width:72px;height:21px;background:#e3e3e3"></div>
<div style="left:360px;top:0px;width:72px;height:21px;background:#fafafa"></div>
<div style="left:432px;top:0px;width:72px;height:21px;background:#e3e3e3"></div>
<div style="left:504px;top:0px;width:72px;height:21px;background:#fafafa"></div>
<div style="left:576px;top:0px;width:72px;height:21px;background:#e3e3e3"></div>
<div style="left:648px;top:0px;width:72px;height:21px;background:#fafafa"></div>
<div style="left:720px;top:0px;width:72px;height:21px;background:#e3e3e3"></div>
<div style="left:792px;top:0px;width:72px;height:21px;background:#fafafa"></div>
<div style="left:864px;top:0px;width:72px;height:21px;background:#e3e3e3"></div>
<div style="left:0;top:21px;width:905px;height:1px;background:#808080"></div>
<div class="t" style="left:7px;top:0px;font-size:13px;line-height:21px;color:#000">07:48</div>
<div class="t" style="left:48px;top:0px;font-size:13px;line-height:21px;color:#000">KO</div>
<div class="t" style="left:79px;top:0px;font-size:13px;line-height:21px;color:#000">15:55</div>
<div class="t" style="left:120px;top:0px;font-size:13px;line-height:21px;color:#000">GE</div>
<div style="left:0px;top:22px;width:72px;height:21px;background:#e3e3e3"></div>
<div style="left:72px;top:22px;width:72px;height:21px;background:#fafafa"></div>
<div style="left:144px;top:22px;width:72px;height:21px;background:#e3e3e3"></div>
<div style="left:216px;top:22px;width:72px;height:21px;background:#fafafa"></div>
<div style="left:288px;top:22px;width:72px;height:21px;background:#e3e3e3"></div>
<div style="left:360px;top:22px;width:72px;height:21px;background:#fafafa"></div>
<div style="left:432px;top:22px;width:72px;height:21px;background:#e3e3e3"></div>
<div style="left:504px;top:22px;width:72px;height:21px;background:#fafafa"></div>
<div style="left:576px;top:22px;width:72px;height:21px;background:#e3e3e3"></div>
<div style="left:648px;top:22px;width:72px;height:21px;background:#fafafa"></div>
<div style="left:720px;top:22px;width:72px;height:21px;background:#e3e3e3"></div>
<div style="left:792px;top:22px;width:72px;height:21px;background:#fafafa"></div>
<div style="left:864px;top:22px;width:72px;height:21px;background:#e3e3e3"></div>
<div style="left:0;top:43px;width:905px;height:1px;background:#808080"></div>
<div style="left:0px;top:44px;width:72px;height:21px;background:#e3e3e3"></div>
<div style="left:72px;top:44px;width:72px;height:21px;background:#fafafa"></div>
<div style="left:144px;top:44px;width:72px;height:21px;background:#e3e3e3"></div>
<div style="left:216px;top:44px;width:72px;height:21px;background:#fafafa"></div>
<div style="left:288px;top:44px;width:72px;height:21px;background:#e3e3e3"></div>
<div style="left:360px;top:44px;width:72px;height:21px;background:#fafafa"></div>
<div style="left:432px;top:44px;width:72px;height:21px;background:#e3e3e3"></div>
<div style="left:504px;top:44px;width:72px;height:21px;background:#fafafa"></div>
<div style="left:576px;top:44px;width:72px;height:21px;background:#e3e3e3"></div>
<div style="left:648px;top:44px;width:72px;height:21px;background:#fafafa"></div>
<div style="left:720px;top:44px;width:72px;height:21px;background:#e3e3e3"></div>
<div style="left:792px;top:44px;width:72px;height:21px;background:#fafafa"></div>
<div style="left:864px;top:44px;width:72px;height:21px;background:#e3e3e3"></div>
<div style="left:0;top:65px;width:905px;height:1px;background:#808080"></div>
<div style="left:0px;top:66px;width:72px;height:21px;background:#c98584"></div>
<div style="left:72px;top:66px;width:72px;height:21px;background:#b2292b"></div>
<div style="left:144px;top:66px;width:72px;height:21px;background:#c98584"></div>
<div style="left:216px;top:66px;width:72px;height:21px;background:#b2292b"></div>
<div style="left:288px;top:66px;width:72px;height:21px;background:#c98584"></div>
<div style="left:360px;top:66px;width:72px;height:21px;background:#b2292b"></div>
<div style="left:432px;top:66px;width:72px;height:21px;background:#c98584"></div>
<div style="left:504px;top:66px;width:72px;height:21px;background:#b2292b"></div>
<div style="left:576px;top:66px;width:72px;height:21px;background:#c98584"></div>
<div style="left:648px;top:66px;width:72px;height:21px;background:#b2292b"></div>
<div style="left:720px;top:66px;width:72px;height:21px;background:#c98584"></div>
<div style="left:792px;top:66px;width:72px;height:21px;background:#b2292b"></div>
<div style="left:864px;top:66px;width:72px;height:21px;background:#c98584"></div>
<div style="left:0;top:87px;width:905px;height:1px;background:#808080"></div>
<div style="left:0px;top:88px;width:72px;height:21px;background:#cfdde4"></div>
<div style="left:72px;top:88px;width:72px;height:21px;background:#bad6e4"></div>
<div style="left:144px;top:88px;width:72px;height:21px;background:#cfdde4"></div>
<div style="left:216px;top:88px;width:72px;height:21px;background:#bad6e4"></div>
<div style="left:288px;top:88px;width:72px;height:21px;background:#cfdde4"></div>
<div style="left:360px;top:88px;width:72px;height:21px;background:#bad6e4"></div>
<div style="left:432px;top:88px;width:72px;height:21px;background:#cfdde4"></div>
<div style="left:504px;top:88px;width:72px;height:21px;background:#bad6e4"></div>
<div style="left:576px;top:88px;width:72px;height:21px;background:#cfdde4"></div>
<div style="left:648px;top:88px;width:72px;height:21px;background:#bad6e4"></div>
<div style="left:720px;top:88px;width:72px;height:21px;background:#cfdde4"></div>
<div style="left:792px;top:88px;width:72px;height:21px;background:#bad6e4"></div>
<div style="left:864px;top:88px;width:72px;height:21px;background:#cfdde4"></div>
<div style="left:0;top:109px;width:905px;height:1px;background:#808080"></div>
<div style="left:0px;top:110px;width:72px;height:21px;background:#e3e3e3"></div>
<div style="left:72px;top:110px;width:72px;height:21px;background:#fafafa"></div>
<div style="left:144px;top:110px;width:72px;height:21px;background:#e3e3e3"></div>
<div style="left:216px;top:110px;width:72px;height:21px;background:#fafafa"></div>
<div style="left:288px;top:110px;width:72px;height:21px;background:#e3e3e3"></div>
<div style="left:360px;top:110px;width:72px;height:21px;background:#fafafa"></div>
<div style="left:432px;top:110px;width:72px;height:21px;background:#e3e3e3"></div>
<div style="left:504px;top:110px;width:72px;height:21px;background:#fafafa"></div>
<div style="left:576px;top:110px;width:72px;height:21px;background:#e3e3e3"></div>
<div style="left:648px;top:110px;width:72px;height:21px;background:#fafafa"></div>
<div style="left:720px;top:110px;width:72px;height:21px;background:#e3e3e3"></div>
<div style="left:792px;top:110px;width:72px;height:21px;background:#fafafa"></div>
<div style="left:864px;top:110px;width:72px;height:21px;background:#e3e3e3"></div>
<div style="left:0;top:131px;width:905px;height:1px;background:#808080"></div>
<div class="t" style="left:7px;top:110px;font-size:13px;line-height:21px;color:#000">07:30</div>
<div class="t" style="left:48px;top:110px;font-size:13px;line-height:21px;color:#000">KO</div>
<div class="t" style="left:79px;top:110px;font-size:13px;line-height:21px;color:#000">16:32</div>
<div class="t" style="left:120px;top:110px;font-size:13px;line-height:21px;color:#000">GE</div>
<div style="left:0px;top:132px;width:72px;height:21px;background:#e3e3e3"></div>
<div style="left:72px;top:132px;width:72px;height:21px;background:#fafafa"></div>
<div style="left:144px;top:132px;width:72px;height:21px;background:#e3e3e3"></div>
<div style="left:216px;top:132px;width:72px;height:21px;background:#fafafa"></div>
<div style="left:288px;top:132px;width:72px;height:21px;background:#e3e3e3"></div>
<div style="left:360px;top:132px;width:72px;height:21px;background:#fafafa"></div>
<div style="left:432px;top:132px;width:72px;height:21px;background:#e3e3e3"></div>
<div style="left:504px;top:132px;width:72px;height:21px;background:#fafafa"></div>
<div style="left:576px;top:132px;width:72px;height:21px;background:#e3e3e3"></div>
<div style="left:648px;top:132px;width:72px;height:21px;background:#fafafa"></div>
<div style="left:720px;top:132px;width:72px;height:21px;background:#e3e3e3"></div>
<div style="left:792px;top:132px;width:72px;height:21px;background:#fafafa"></div>
<div style="left:864px;top:132px;width:72px;height:21px;background:#e3e3e3"></div>
<div style="left:0;top:153px;width:905px;height:1px;background:#808080"></div>
<div class="t" style="left:7px;top:132px;font-size:13px;line-height:21px;color:#000">07:42</div>
<div class="t" style="left:48px;top:132px;font-size:13px;line-height:21px;color:#000">KO</div>
<div class="t" style="left:79px;top:132px;font-size:13px;line-height:21px;color:#000">16:40</div>
<div class="t" style="left:120px;top:132px;font-size:13px;line-height:21px;color:#000">GE</div>
<div style="left:0px;top:154px;width:72px;height:21px;background:#e3e3e3"></div>
<div style="left:72px;top:154px;width:72px;height:21px;background:#fafafa"></div>
<div style="left:144px;top:154px;width:72px;height:21px;background:#e3e3e3"></div>
<div style="left:216px;top:154px;width:72px;height:21px;background:#fafafa"></div>
<div style="left:288px;top:154px;width:72px;height:21px;background:#e3e3e3"></div>
<div style="left:360px;top:154px;width:72px;height:21px;background:#fafafa"></div>
<div style="left:432px;top:154px;width:72px;height:21px;background:#e3e3e3"></div>
<div style="left:504px;top:154px;width:72px;height:21px;background:#fafafa"></div>
<div style="left:576px;top:154px;width:72px;height:21px;background:#e3e3e3"></div>
<div style="left:648px;top:154px;width:72px;height:21px;background:#fafafa"></div>
<div style="left:720px;top:154px;width:72px;height:21px;background:#e3e3e3"></div>
<div style="left:792px;top:154px;width:72px;height:21px;background:#fafafa"></div>
<div style="left:864px;top:154px;width:72px;height:21px;background:#e3e3e3"></div>
<div style="left:0;top:175px;width:905px;height:1px;background:#808080"></div>
<div class="t" style="left:7px;top:154px;font-size:13px;line-height:21px;color:#000">07:42</div>
<div class="t" style="left:48px;top:154px;font-size:13px;line-height:21px;color:#000">KO</div>
<div class="t" style="left:79px;top:154px;font-size:13px;line-height:21px;color:#000">16:02</div>
<div class="t" style="left:120px;top:154px;font-size:13px;line-height:21px;color:#000">GE</div>
<div style="left:0px;top:176px;width:72px;height:21px;background:#e3e3e3"></div>
<div style="left:72px;top:176px;width:72px;height:21px;background:#fafafa"></div>
<div style="left:144px;top:176px;width:72px;height:21px;background:#e3e3e3"></div>
<div style="left:216px;top:176px;width:72px;height:21px;background:#fafafa"></div>
<div style="left:288px;top:176px;width:72px;height:21px;background:#e3e3e3"></div>
<div style="left:360px;top:176px;width:72px;height:21px;background:#fafafa"></div>
<div style="left:432px;top:176px;width:72px;height:21px;background:#e3e3e3"></div>
<div style="left:504px;top:176px;width:72px;height:21px;background:#fafafa"></div>
<div style="left:576px;top:176px;width:72px;height:21px;background:#e3e3e3"></div>
<div style="left:648px;top:176px;width:72px;height:21px;background:#fafafa"></div>
<div style="left:720px;top:176px;width:72px;height:21px;background:#e3e3e3"></div>
<div style="left:792px;top:176px;width:72px;height:21px;background:#fafafa"></div>
<div style="left:864px;top:176px;width:72px;height:21px;background:#e3e3e3"></div>
<div style="left:0;top:197px;width:905px;height:1px;background:#808080"></div>
<div class="t" style="left:7px;top:176px;font-size:13px;line-height:21px;color:#000">07:20</div>
<div class="t" style="left:48px;top:176px;font-size:13px;line-height:21px;color:#000">KO</div>
<div class="t" style="left:79px;top:176px;font-size:13px;line-height:21px;color:#000">16:37</div>
<div class="t" style="left:120px;top:176px;font-size:13px;line-height:21px;color:#000">GE</div>
<div style="left:0px;top:198px;width:72px;height:21px;background:#e3e3e3"></div>
<div style="left:72px;top:198px;width:72px;height:21px;background:#fafafa"></div>
<div style="left:144px;top:198px;width:72px;height:21px;background:#e3e3e3"></div>
<div style="left:216px;top:198px;width:72px;height:21px;background:#fafafa"></div>
<div style="left:288px;top:198px;width:72px;height:21px;background:#e3e3e3"></div>
<div style="left:360px;top:198px;width:72px;height:21px;background:#fafafa"></div>
<div style="left:432px;top:198px;width:72px;height:21px;background:#e3e3e3"></div>
<div style="left:504px;top:198px;width:72px;height:21px;background:#fafafa"></div>
<div style="left:576px;top:198px;width:72px;height:21px;background:#e3e3e3"></div>
<div style="left:648px;top:198px;width:72px;height:21px;background:#fafafa"></div>
<div style="left:720px;top:198px;width:72px;height:21px;background:#e3e3e3"></div>
<div style="left:792px;top:198px;width:72px;height:21px;background:#fafafa"></div>
<div style="left:864px;top:198px;width:72px;height:21px;background:#e3e3e3"></div>
<div style="left:0;top:219px;width:905px;height:1px;background:#808080"></div>
<div class="t" style="left:7px;top:198px;font-size:13px;line-height:21px;color:#000">07:13</div>
<div class="t" style="left:48px;top:198px;font-size:13px;line-height:21px;color:#000">KO</div>
<div class="t" style="left:79px;top:198px;font-size:13px;line-height:21px;color:#000">15:31</div>
<div class="t" style="left:120px;top:198px;font-size:13px;line-height:21px;color:#000">GE</div>
<div class="t" style="left:151px;top:198px;font-size:13px;line-height:21px;color:#000">19:35</div>
<div class="t" style="left:192px;top:198px;font-size:13px;line-height:21px;color:#000">KO</div>
<div class="t" style="left:223px;top:198px;font-size:13px;line-height:21px;color:#000">19:35</div>
<div class="t" style="left:264px;top:198px;font-size:13px;line-height:21px;color:#000">GE</div>
<div style="left:0px;top:220px;width:72px;height:21px;background:#dbe2ea"></div>
<div style="left:72px;top:220px;width:72px;height:21px;background:#d0e4f0"></div>
<div style="left:144px;top:220px;width:72px;height:21px;background:#dbe2ea"></div>
<div style="left:216px;top:220px;width:72px;height:21px;background:#d0e4f0"></div>
<div style="left:288px;top:220px;width:72px;height:21px;background:#dbe2ea"></div>
<div style="left:360px;top:220px;width:72px;height:21px;background:#d0e4f0"></div>
<div style="left:432px;top:220px;width:72px;height:21px;background:#dbe2ea"></div>
<div style="left:504px;top:220px;width:72px;height:21px;background:#d0e4f0"></div>
<div style="left:576px;top:220px;width:72px;height:21px;background:#dbe2ea"></div>
<div style="left:648px;top:220px;width:72px;height:21px;background:#d0e4f0"></div>
<div style="left:720px;top:220px;width:72px;height:21px;background:#dbe2ea"></div>
<div style="left:792px;top:220px;width:72px;height:21px;background:#d0e4f0"></div>
<div style="left:864px;top:220px;width:72px;height:21px;background:#dbe2ea"></div>
<div style="left:0;top:241px;width:905px;height:1px;background:#808080"></div>
<div style="left:0px;top:242px;width:72px;height:21px;background:#cfdde4"></div>
<div style="left:72px;top:242px;width:72px;height:21px;background:#bad6e4"></div>
<div style="left:144px;top:242px;width:72px;height:21px;background:#cfdde4"></div>
<div style="left:216px;top:242px;width:72px;height:21px;background:#bad6e4"></div>
<div style="left:288px;top:242px;width:72px;height:21px;background:#cfdde4"></div>
<div style="left:360px;top:242px;width:72px;height:21px;background:#bad6e4"></div>
<div style="left:432px;top:242px;width:72px;height:21px;background:#cfdde4"></div>
<div style="left:504px;top:242px;width:72px;height:21px;background:#bad6e4"></div>
<div style="left:576px;top:242px;width:72px;height:21px;background:#cfdde4"></div>
<div style="left:648px;top:242px;width:72px;height:21px;background:#bad6e4"></div>
<div style="left:720px;top:242px;width:72px;height:21px;background:#cfdde4"></div>
<div style="left:792px;top:242px;width:72px;height:21px;background:#bad6e4"></div>
<div style="left:864px;top:242px;width:72px;height:21px;background:#cfdde4"></div>
<div style="left:0;top:263px;width:905px;height:1px;background:#808080"></div>
<div style="left:0px;top:264px;width:72px;height:21px;background:#e3e3e3"></div>
<div style="left:72px;top:264px;width:72px;height:21px;background:#fafafa"></div>
<div style="left:144px;top:264px;width:72px;height:21px;background:#e3e3e3"></div>
<div style="left:216px;top:264px;width:72px;height:21px;background:#fafafa"></div>
<div style="left:288px;top:264px;width:72px;height:21px;background:#e3e3e3"></div>
<div style="left:360px;top:264px;width:72px;height:21px;background:#fafafa"></div>
<div style="left:432px;top:264px;width:72px;height:21px;background:#e3e3e3"></div>
<div style="left:504px;top:264px;width:72px;height:21px;background:#fafafa"></div>
<div style="left:576px;top:264px;width:72px;height:21px;background:#e3e3e3"></div>
<div style="left:648px;top:264px;width:72px;height:21px;background:#fafafa"></div>
<div style="left:720px;top:264px;width:72px;height:21px;background:#e3e3e3"></div>
<div style="left:792px;top:264px;width:72px;height:21px;background:#fafafa"></div>
<div style="left:864px;top:264px;width:72px;height:21px;background:#e3e3e3"></div>
<div style="left:0;top:285px;width:905px;height:1px;background:#808080"></div>
<div class="t" style="left:7px;top:264px;font-size:13px;line-height:21px;color:#000">06:40</div>
<div class="t" style="left:48px;top:264px;font-size:13px;line-height:21px;color:#000">KO</div>
<div class="t" style="left:79px;top:264px;font-size:13px;line-height:21px;color:#000">10:09</div>
<div class="t" style="left:120px;top:264px;font-size:13px;line-height:21px;color:#000">KO</div>
<div class="t" style="left:151px;top:264px;font-size:13px;line-height:21px;color:#000">10:10</div>
<div class="t" style="left:192px;top:264px;font-size:13px;line-height:21px;color:#000">GE</div>
<div class="t" style="left:223px;top:264px;font-size:13px;line-height:21px;color:#000">10:20</div>
<div class="t" style="left:264px;top:264px;font-size:13px;line-height:21px;color:#000">KO</div>
<div class="t" style="left:295px;top:264px;font-size:13px;line-height:21px;color:#000">10:22</div>
<div class="t" style="left:336px;top:264px;font-size:13px;line-height:21px;color:#000">GE</div>
<div class="t" style="left:367px;top:264px;font-size:13px;line-height:21px;color:#000">10:30</div>
<div class="t" style="left:408px;top:264px;font-size:13px;line-height:21px;color:#000">KO</div>
<div class="t" style="left:439px;top:264px;font-size:13px;line-height:21px;color:#000">10:30</div>
<div class="t" style="left:480px;top:264px;font-size:13px;line-height:21px;color:#000">GE</div>
<div class="t" style="left:511px;top:264px;font-size:13px;line-height:21px;color:#000">10:31</div>
<div class="t" style="left:552px;top:264px;font-size:13px;line-height:21px;color:#000">KO</div>
<div class="t" style="left:583px;top:264px;font-size:13px;line-height:21px;color:#000">10:46</div>
<div class="t" style="left:624px;top:264px;font-size:13px;line-height:21px;color:#000">GE</div>
<div class="t" style="left:655px;top:264px;font-size:13px;line-height:21px;color:#000">10:46</div>
<div class="t" style="left:696px;top:264px;font-size:13px;line-height:21px;color:#000">KO</div>
<div class="t" style="left:727px;top:264px;font-size:13px;line-height:21px;color:#000">10:56</div>
<div class="t" style="left:768px;top:264px;font-size:13px;line-height:21px;color:#000">KO</div>
<div class="t" style="left:799px;top:264px;font-size:13px;line-height:21px;color:#000">11:08</div>
<div class="t" style="left:840px;top:264px;font-size:13px;line-height:21px;color:#000">GE</div>
<div class="t" style="left:871px;top:264px;font-size:13px;line-height:21px;color:#000">11:09</div>
<div class="t" style="left:912px;top:264px;font-size:13px;line-height:21px;color:#000">KO</div>
<div style="left:0px;top:286px;width:72px;height:21px;background:#e3e3e3"></div>
<div style="left:72px;top:286px;width:72px;height:21px;background:#fafafa"></div>
<div style="left:144px;top:286px;width:72px;height:21px;background:#e3e3e3"></div>
<div style="left:216px;top:286px;width:72px;height:21px;background:#fafafa"></div>
<div style="left:288px;top:286px;width:72px;height:21px;background:#e3e3e3"></div>
<div style="left:360px;top:286px;width:72px;height:21px;background:#fafafa"></div>
<div style="left:432px;top:286px;width:72px;height:21px;background:#e3e3e3"></div>
<div style="left:504px;top:286px;width:72px;height:21px;background:#fafafa"></div>
<div style="left:576px;top:286px;width:72px;height:21px;background:#e3e3e3"></div>
<div style="left:648px;top:286px;width:72px;height:21px;background:#fafafa"></div>
<div style="left:720px;top:286px;width:72px;height:21px;background:#e3e3e3"></div>
<div style="left:792px;top:286px;width:72px;height:21px;background:#fafafa"></div>
<div style="left:864px;top:286px;width:72px;height:21px;background:#e3e3e3"></div>
<div style="left:0;top:307px;width:905px;height:1px;background:#808080"></div>
<div class="t" style="left:7px;top:286px;font-size:13px;line-height:21px;color:#000">07:30</div>
<div class="t" style="left:48px;top:286px;font-size:13px;line-height:21px;color:#000">KO</div>
<div class="t" style="left:79px;top:286px;font-size:13px;line-height:21px;color:#000">14:21</div>
<div class="t" style="left:120px;top:286px;font-size:13px;line-height:21px;color:#000">KO</div>
<div class="t" style="left:151px;top:286px;font-size:13px;line-height:21px;color:#000">14:21</div>
<div class="t" style="left:192px;top:286px;font-size:13px;line-height:21px;color:#000">GE</div>
<div class="t" style="left:223px;top:286px;font-size:13px;line-height:21px;color:#000">14:22</div>
<div class="t" style="left:264px;top:286px;font-size:13px;line-height:21px;color:#000">GE</div>
<div class="t" style="left:295px;top:286px;font-size:13px;line-height:21px;color:#000">14:22</div>
<div class="t" style="left:336px;top:286px;font-size:13px;line-height:21px;color:#000">KO</div>
<div class="t" style="left:367px;top:286px;font-size:13px;line-height:21px;color:#000">16:41</div>
<div class="t" style="left:408px;top:286px;font-size:13px;line-height:21px;color:#000">GE</div>
<div style="left:0px;top:308px;width:72px;height:21px;background:#0078d7"></div>
<div style="left:72px;top:308px;width:72px;height:21px;background:#0078d7"></div>
<div style="left:144px;top:308px;width:72px;height:21px;background:#0078d7"></div>
<div style="left:216px;top:308px;width:72px;height:21px;background:#0078d7"></div>
<div style="left:288px;top:308px;width:72px;height:21px;background:#0078d7"></div>
<div style="left:360px;top:308px;width:72px;height:21px;background:#0078d7"></div>
<div style="left:432px;top:308px;width:72px;height:21px;background:#0078d7"></div>
<div style="left:504px;top:308px;width:72px;height:21px;background:#0078d7"></div>
<div style="left:576px;top:308px;width:72px;height:21px;background:#0078d7"></div>
<div style="left:648px;top:308px;width:72px;height:21px;background:#0078d7"></div>
<div style="left:720px;top:308px;width:72px;height:21px;background:#0078d7"></div>
<div style="left:792px;top:308px;width:72px;height:21px;background:#0078d7"></div>
<div style="left:864px;top:308px;width:72px;height:21px;background:#0078d7"></div>
<div style="left:0;top:329px;width:905px;height:1px;background:#808080"></div>
<div class="t" style="left:7px;top:308px;font-size:13px;line-height:21px;color:#e3e3e3">07:53</div>
<div class="t" style="left:48px;top:308px;font-size:13px;line-height:21px;color:#e3e3e3">KO</div>
<div class="t" style="left:79px;top:308px;font-size:13px;line-height:21px;color:#fff">16:34</div>
<div class="t" style="left:120px;top:308px;font-size:13px;line-height:21px;color:#fff">GE</div>
<div style="left:144px;top:308px;width:42px;height:21px;background:#fff;border:1px solid #c8c8c8;border-bottom:none"></div>
<div style="left:146px;top:311px;width:1px;height:15px;background:#000"></div>
<div style="left:0px;top:330px;width:72px;height:21px;background:#e3e3e3"></div>
<div style="left:72px;top:330px;width:72px;height:21px;background:#fafafa"></div>
<div style="left:144px;top:330px;width:72px;height:21px;background:#e3e3e3"></div>
<div style="left:216px;top:330px;width:72px;height:21px;background:#fafafa"></div>
<div style="left:288px;top:330px;width:72px;height:21px;background:#e3e3e3"></div>
<div style="left:360px;top:330px;width:72px;height:21px;background:#fafafa"></div>
<div style="left:432px;top:330px;width:72px;height:21px;background:#e3e3e3"></div>
<div style="left:504px;top:330px;width:72px;height:21px;background:#fafafa"></div>
<div style="left:576px;top:330px;width:72px;height:21px;background:#e3e3e3"></div>
<div style="left:648px;top:330px;width:72px;height:21px;background:#fafafa"></div>
<div style="left:720px;top:330px;width:72px;height:21px;background:#e3e3e3"></div>
<div style="left:792px;top:330px;width:72px;height:21px;background:#fafafa"></div>
<div style="left:864px;top:330px;width:72px;height:21px;background:#e3e3e3"></div>
<div style="left:0;top:351px;width:905px;height:1px;background:#808080"></div>
<div class="t" style="left:7px;top:330px;font-size:13px;line-height:21px;color:#000">07:41</div>
<div class="t" style="left:48px;top:330px;font-size:13px;line-height:21px;color:#000">KO</div>
<div class="t" style="left:79px;top:330px;font-size:13px;line-height:21px;color:#000">16:34</div>
<div class="t" style="left:120px;top:330px;font-size:13px;line-height:21px;color:#000">GE</div>
<div style="left:0px;top:352px;width:72px;height:21px;background:#e3e3e3"></div>
<div style="left:72px;top:352px;width:72px;height:21px;background:#fafafa"></div>
<div style="left:144px;top:352px;width:72px;height:21px;background:#e3e3e3"></div>
<div style="left:216px;top:352px;width:72px;height:21px;background:#fafafa"></div>
<div style="left:288px;top:352px;width:72px;height:21px;background:#e3e3e3"></div>
<div style="left:360px;top:352px;width:72px;height:21px;background:#fafafa"></div>
<div style="left:432px;top:352px;width:72px;height:21px;background:#e3e3e3"></div>
<div style="left:504px;top:352px;width:72px;height:21px;background:#fafafa"></div>
<div style="left:576px;top:352px;width:72px;height:21px;background:#e3e3e3"></div>
<div style="left:648px;top:352px;width:72px;height:21px;background:#fafafa"></div>
<div style="left:720px;top:352px;width:72px;height:21px;background:#e3e3e3"></div>
<div style="left:792px;top:352px;width:72px;height:21px;background:#fafafa"></div>
<div style="left:864px;top:352px;width:72px;height:21px;background:#e3e3e3"></div>
<div style="left:0;top:373px;width:905px;height:1px;background:#808080"></div>
<div class="t" style="left:7px;top:352px;font-size:13px;line-height:21px;color:#000">07:31</div>
<div class="t" style="left:48px;top:352px;font-size:13px;line-height:21px;color:#000">KO</div>
<div class="t" style="left:79px;top:352px;font-size:13px;line-height:21px;color:#000">15:32</div>
<div class="t" style="left:120px;top:352px;font-size:13px;line-height:21px;color:#000">GE</div>
<div style="left:0px;top:374px;width:72px;height:21px;background:#dbe2ea"></div>
<div style="left:72px;top:374px;width:72px;height:21px;background:#d0e4f0"></div>
<div style="left:144px;top:374px;width:72px;height:21px;background:#dbe2ea"></div>
<div style="left:216px;top:374px;width:72px;height:21px;background:#d0e4f0"></div>
<div style="left:288px;top:374px;width:72px;height:21px;background:#dbe2ea"></div>
<div style="left:360px;top:374px;width:72px;height:21px;background:#d0e4f0"></div>
<div style="left:432px;top:374px;width:72px;height:21px;background:#dbe2ea"></div>
<div style="left:504px;top:374px;width:72px;height:21px;background:#d0e4f0"></div>
<div style="left:576px;top:374px;width:72px;height:21px;background:#dbe2ea"></div>
<div style="left:648px;top:374px;width:72px;height:21px;background:#d0e4f0"></div>
<div style="left:720px;top:374px;width:72px;height:21px;background:#dbe2ea"></div>
<div style="left:792px;top:374px;width:72px;height:21px;background:#d0e4f0"></div>
<div style="left:864px;top:374px;width:72px;height:21px;background:#dbe2ea"></div>
<div style="left:0;top:395px;width:905px;height:1px;background:#808080"></div>
<div style="left:0px;top:396px;width:72px;height:21px;background:#cfdde4"></div>
<div style="left:72px;top:396px;width:72px;height:21px;background:#bad6e4"></div>
<div style="left:144px;top:396px;width:72px;height:21px;background:#cfdde4"></div>
<div style="left:216px;top:396px;width:72px;height:21px;background:#bad6e4"></div>
<div style="left:288px;top:396px;width:72px;height:21px;background:#cfdde4"></div>
<div style="left:360px;top:396px;width:72px;height:21px;background:#bad6e4"></div>
<div style="left:432px;top:396px;width:72px;height:21px;background:#cfdde4"></div>
<div style="left:504px;top:396px;width:72px;height:21px;background:#bad6e4"></div>
<div style="left:576px;top:396px;width:72px;height:21px;background:#cfdde4"></div>
<div style="left:648px;top:396px;width:72px;height:21px;background:#bad6e4"></div>
<div style="left:720px;top:396px;width:72px;height:21px;background:#cfdde4"></div>
<div style="left:792px;top:396px;width:72px;height:21px;background:#bad6e4"></div>
<div style="left:864px;top:396px;width:72px;height:21px;background:#cfdde4"></div>
<div style="left:0;top:417px;width:905px;height:1px;background:#808080"></div>
<div style="left:0px;top:418px;width:72px;height:21px;background:#e3e3e3"></div>
<div style="left:72px;top:418px;width:72px;height:21px;background:#fafafa"></div>
<div style="left:144px;top:418px;width:72px;height:21px;background:#e3e3e3"></div>
<div style="left:216px;top:418px;width:72px;height:21px;background:#fafafa"></div>
<div style="left:288px;top:418px;width:72px;height:21px;background:#e3e3e3"></div>
<div style="left:360px;top:418px;width:72px;height:21px;background:#fafafa"></div>
<div style="left:432px;top:418px;width:72px;height:21px;background:#e3e3e3"></div>
<div style="left:504px;top:418px;width:72px;height:21px;background:#fafafa"></div>
<div style="left:576px;top:418px;width:72px;height:21px;background:#e3e3e3"></div>
<div style="left:648px;top:418px;width:72px;height:21px;background:#fafafa"></div>
<div style="left:720px;top:418px;width:72px;height:21px;background:#e3e3e3"></div>
<div style="left:792px;top:418px;width:72px;height:21px;background:#fafafa"></div>
<div style="left:864px;top:418px;width:72px;height:21px;background:#e3e3e3"></div>
<div style="left:0;top:439px;width:905px;height:1px;background:#808080"></div>
<div class="t" style="left:7px;top:418px;font-size:13px;line-height:21px;color:#000">06:29</div>
<div class="t" style="left:48px;top:418px;font-size:13px;line-height:21px;color:#000">KO</div>
<div class="t" style="left:79px;top:418px;font-size:13px;line-height:21px;color:#000">15:28</div>
<div class="t" style="left:120px;top:418px;font-size:13px;line-height:21px;color:#000">KO</div>
<div class="t" style="left:151px;top:418px;font-size:13px;line-height:21px;color:#000">15:29</div>
<div class="t" style="left:192px;top:418px;font-size:13px;line-height:21px;color:#000">GE</div>
<div class="t" style="left:223px;top:418px;font-size:13px;line-height:21px;color:#000">16:01</div>
<div class="t" style="left:264px;top:418px;font-size:13px;line-height:21px;color:#000">GE</div>
<div style="left:0px;top:440px;width:72px;height:21px;background:#e3e3e3"></div>
<div style="left:72px;top:440px;width:72px;height:21px;background:#fafafa"></div>
<div style="left:144px;top:440px;width:72px;height:21px;background:#e3e3e3"></div>
<div style="left:216px;top:440px;width:72px;height:21px;background:#fafafa"></div>
<div style="left:288px;top:440px;width:72px;height:21px;background:#e3e3e3"></div>
<div style="left:360px;top:440px;width:72px;height:21px;background:#fafafa"></div>
<div style="left:432px;top:440px;width:72px;height:21px;background:#e3e3e3"></div>
<div style="left:504px;top:440px;width:72px;height:21px;background:#fafafa"></div>
<div style="left:576px;top:440px;width:72px;height:21px;background:#e3e3e3"></div>
<div style="left:648px;top:440px;width:72px;height:21px;background:#fafafa"></div>
<div style="left:720px;top:440px;width:72px;height:21px;background:#e3e3e3"></div>
<div style="left:792px;top:440px;width:72px;height:21px;background:#fafafa"></div>
<div style="left:864px;top:440px;width:72px;height:21px;background:#e3e3e3"></div>
<div style="left:0;top:461px;width:905px;height:1px;background:#808080"></div>
<div class="t" style="left:7px;top:440px;font-size:13px;line-height:21px;color:#000">07:04</div>
<div class="t" style="left:48px;top:440px;font-size:13px;line-height:21px;color:#000">KO</div>
<div class="t" style="left:79px;top:440px;font-size:13px;line-height:21px;color:#000">07:06</div>
<div class="t" style="left:120px;top:440px;font-size:13px;line-height:21px;color:#000">KO</div>
<div class="t" style="left:151px;top:440px;font-size:13px;line-height:21px;color:#000">08:48</div>
<div class="t" style="left:192px;top:440px;font-size:13px;line-height:21px;color:#000">GE</div>
<div class="t" style="left:223px;top:440px;font-size:13px;line-height:21px;color:#000">09:07</div>
<div class="t" style="left:264px;top:440px;font-size:13px;line-height:21px;color:#000">KO</div>
<div class="t" style="left:295px;top:440px;font-size:13px;line-height:21px;color:#000">15:54</div>
<div class="t" style="left:336px;top:440px;font-size:13px;line-height:21px;color:#000">KO</div>
<div class="t" style="left:367px;top:440px;font-size:13px;line-height:21px;color:#000">15:59</div>
<div class="t" style="left:408px;top:440px;font-size:13px;line-height:21px;color:#000">KO</div>
<div class="t" style="left:439px;top:440px;font-size:13px;line-height:21px;color:#000">16:02</div>
<div class="t" style="left:480px;top:440px;font-size:13px;line-height:21px;color:#000">GE</div>
<div class="t" style="left:511px;top:440px;font-size:13px;line-height:21px;color:#000">16:02</div>
<div class="t" style="left:552px;top:440px;font-size:13px;line-height:21px;color:#000">KO</div>
<div class="t" style="left:583px;top:440px;font-size:13px;line-height:21px;color:#000">16:09</div>
<div class="t" style="left:624px;top:440px;font-size:13px;line-height:21px;color:#000">KO</div>
<div class="t" style="left:655px;top:440px;font-size:13px;line-height:21px;color:#000">16:10</div>
<div class="t" style="left:696px;top:440px;font-size:13px;line-height:21px;color:#000">GE</div>
<div class="t" style="left:727px;top:440px;font-size:13px;line-height:21px;color:#000">16:10</div>
<div class="t" style="left:768px;top:440px;font-size:13px;line-height:21px;color:#000">KO</div>
<div class="t" style="left:799px;top:440px;font-size:13px;line-height:21px;color:#000">16:26</div>
<div class="t" style="left:840px;top:440px;font-size:13px;line-height:21px;color:#000">GE</div>
<div style="left:0px;top:462px;width:72px;height:21px;background:#e3e3e3"></div>
<div style="left:72px;top:462px;width:72px;height:21px;background:#fafafa"></div>
<div style="left:144px;top:462px;width:72px;height:21px;background:#e3e3e3"></div>
<div style="left:216px;top:462px;width:72px;height:21px;background:#fafafa"></div>
<div style="left:288px;top:462px;width:72px;height:21px;background:#e3e3e3"></div>
<div style="left:360px;top:462px;width:72px;height:21px;background:#fafafa"></div>
<div style="left:432px;top:462px;width:72px;height:21px;background:#e3e3e3"></div>
<div style="left:504px;top:462px;width:72px;height:21px;background:#fafafa"></div>
<div style="left:576px;top:462px;width:72px;height:21px;background:#e3e3e3"></div>
<div style="left:648px;top:462px;width:72px;height:21px;background:#fafafa"></div>
<div style="left:720px;top:462px;width:72px;height:21px;background:#e3e3e3"></div>
<div style="left:792px;top:462px;width:72px;height:21px;background:#fafafa"></div>
<div style="left:864px;top:462px;width:72px;height:21px;background:#e3e3e3"></div>
<div style="left:0;top:483px;width:905px;height:1px;background:#808080"></div>
<div class="t" style="left:7px;top:462px;font-size:13px;line-height:21px;color:#000">07:53</div>
<div class="t" style="left:48px;top:462px;font-size:13px;line-height:21px;color:#000">KO</div>
<div class="t" style="left:79px;top:462px;font-size:13px;line-height:21px;color:#000">11:00</div>
<div class="t" style="left:120px;top:462px;font-size:13px;line-height:21px;color:#000">KO</div>
<div class="t" style="left:151px;top:462px;font-size:13px;line-height:21px;color:#000">11:01</div>
<div class="t" style="left:192px;top:462px;font-size:13px;line-height:21px;color:#000">KO</div>
<div class="t" style="left:223px;top:462px;font-size:13px;line-height:21px;color:#000">11:01</div>
<div class="t" style="left:264px;top:462px;font-size:13px;line-height:21px;color:#000">GE</div>
<div class="t" style="left:295px;top:462px;font-size:13px;line-height:21px;color:#000">11:03</div>
<div class="t" style="left:336px;top:462px;font-size:13px;line-height:21px;color:#000">KO</div>
<div class="t" style="left:367px;top:462px;font-size:13px;line-height:21px;color:#000">11:03</div>
<div class="t" style="left:408px;top:462px;font-size:13px;line-height:21px;color:#000">GE</div>
<div class="t" style="left:439px;top:462px;font-size:13px;line-height:21px;color:#000">11:14</div>
<div class="t" style="left:480px;top:462px;font-size:13px;line-height:21px;color:#000">GE</div>
<div class="t" style="left:511px;top:462px;font-size:13px;line-height:21px;color:#000">11:14</div>
<div class="t" style="left:552px;top:462px;font-size:13px;line-height:21px;color:#000">KO</div>
<div class="t" style="left:583px;top:462px;font-size:13px;line-height:21px;color:#000">11:16</div>
<div class="t" style="left:624px;top:462px;font-size:13px;line-height:21px;color:#000">KO</div>
<div class="t" style="left:655px;top:462px;font-size:13px;line-height:21px;color:#000">11:17</div>
<div class="t" style="left:696px;top:462px;font-size:13px;line-height:21px;color:#000">GE</div>
<div class="t" style="left:727px;top:462px;font-size:13px;line-height:21px;color:#000">11:27</div>
<div class="t" style="left:768px;top:462px;font-size:13px;line-height:21px;color:#000">GE</div>
<div class="t" style="left:799px;top:462px;font-size:13px;line-height:21px;color:#000">11:27</div>
<div class="t" style="left:840px;top:462px;font-size:13px;line-height:21px;color:#000">KO</div>
<div class="t" style="left:871px;top:462px;font-size:13px;line-height:21px;color:#000">16:31</div>
<div class="t" style="left:912px;top:462px;font-size:13px;line-height:21px;color:#000">GE</div>
<div style="left:0px;top:484px;width:72px;height:21px;background:#e3e3e3"></div>
<div style="left:72px;top:484px;width:72px;height:21px;background:#fafafa"></div>
<div style="left:144px;top:484px;width:72px;height:21px;background:#e3e3e3"></div>
<div style="left:216px;top:484px;width:72px;height:21px;background:#fafafa"></div>
<div style="left:288px;top:484px;width:72px;height:21px;background:#e3e3e3"></div>
<div style="left:360px;top:484px;width:72px;height:21px;background:#fafafa"></div>
<div style="left:432px;top:484px;width:72px;height:21px;background:#e3e3e3"></div>
<div style="left:504px;top:484px;width:72px;height:21px;background:#fafafa"></div>
<div style="left:576px;top:484px;width:72px;height:21px;background:#e3e3e3"></div>
<div style="left:648px;top:484px;width:72px;height:21px;background:#fafafa"></div>
<div style="left:720px;top:484px;width:72px;height:21px;background:#e3e3e3"></div>
<div style="left:792px;top:484px;width:72px;height:21px;background:#fafafa"></div>
<div style="left:864px;top:484px;width:72px;height:21px;background:#e3e3e3"></div>
<div style="left:0;top:505px;width:905px;height:1px;background:#808080"></div>
<div class="t" style="left:7px;top:484px;font-size:13px;line-height:21px;color:#000">07:41</div>
<div class="t" style="left:48px;top:484px;font-size:13px;line-height:21px;color:#000">KO</div>
<div class="t" style="left:79px;top:484px;font-size:13px;line-height:21px;color:#000">15:56</div>
<div class="t" style="left:120px;top:484px;font-size:13px;line-height:21px;color:#000">KO</div>
<div class="t" style="left:151px;top:484px;font-size:13px;line-height:21px;color:#000">15:57</div>
<div class="t" style="left:192px;top:484px;font-size:13px;line-height:21px;color:#000">KO</div>
<div class="t" style="left:223px;top:484px;font-size:13px;line-height:21px;color:#000">15:57</div>
<div class="t" style="left:264px;top:484px;font-size:13px;line-height:21px;color:#000">GE</div>
<div class="t" style="left:295px;top:484px;font-size:13px;line-height:21px;color:#000">16:00</div>
<div class="t" style="left:336px;top:484px;font-size:13px;line-height:21px;color:#000">KO</div>
<div class="t" style="left:367px;top:484px;font-size:13px;line-height:21px;color:#000">16:01</div>
<div class="t" style="left:408px;top:484px;font-size:13px;line-height:21px;color:#000">KO</div>
<div class="t" style="left:439px;top:484px;font-size:13px;line-height:21px;color:#000">16:26</div>
<div class="t" style="left:480px;top:484px;font-size:13px;line-height:21px;color:#000">GE</div>
<div class="t" style="left:511px;top:484px;font-size:13px;line-height:21px;color:#000">16:32</div>
<div class="t" style="left:552px;top:484px;font-size:13px;line-height:21px;color:#000">GE</div>
<div style="left:0px;top:506px;width:72px;height:21px;background:#e3e3e3"></div>
<div style="left:72px;top:506px;width:72px;height:21px;background:#fafafa"></div>
<div style="left:144px;top:506px;width:72px;height:21px;background:#e3e3e3"></div>
<div style="left:216px;top:506px;width:72px;height:21px;background:#fafafa"></div>
<div style="left:288px;top:506px;width:72px;height:21px;background:#e3e3e3"></div>
<div style="left:360px;top:506px;width:72px;height:21px;background:#fafafa"></div>
<div style="left:432px;top:506px;width:72px;height:21px;background:#e3e3e3"></div>
<div style="left:504px;top:506px;width:72px;height:21px;background:#fafafa"></div>
<div style="left:576px;top:506px;width:72px;height:21px;background:#e3e3e3"></div>
<div style="left:648px;top:506px;width:72px;height:21px;background:#fafafa"></div>
<div style="left:720px;top:506px;width:72px;height:21px;background:#e3e3e3"></div>
<div style="left:792px;top:506px;width:72px;height:21px;background:#fafafa"></div>
<div style="left:864px;top:506px;width:72px;height:21px;background:#e3e3e3"></div>
<div style="left:0;top:527px;width:905px;height:1px;background:#808080"></div>
<div class="t" style="left:7px;top:506px;font-size:13px;line-height:21px;color:#000">06:50</div>
<div class="t" style="left:48px;top:506px;font-size:13px;line-height:21px;color:#000">KO</div>
<div class="t" style="left:79px;top:506px;font-size:13px;line-height:21px;color:#000">10:21</div>
<div class="t" style="left:120px;top:506px;font-size:13px;line-height:21px;color:#000">KO</div>
<div class="t" style="left:151px;top:506px;font-size:13px;line-height:21px;color:#000">10:24</div>
<div class="t" style="left:192px;top:506px;font-size:13px;line-height:21px;color:#000">GE</div>
<div class="t" style="left:223px;top:506px;font-size:13px;line-height:21px;color:#000">10:25</div>
<div class="t" style="left:264px;top:506px;font-size:13px;line-height:21px;color:#000">KO</div>
<div class="t" style="left:295px;top:506px;font-size:13px;line-height:21px;color:#000">10:43</div>
<div class="t" style="left:336px;top:506px;font-size:13px;line-height:21px;color:#000">KO</div>
<div class="t" style="left:367px;top:506px;font-size:13px;line-height:21px;color:#000">10:43</div>
<div class="t" style="left:408px;top:506px;font-size:13px;line-height:21px;color:#000">GE</div>
<div class="t" style="left:439px;top:506px;font-size:13px;line-height:21px;color:#000">10:44</div>
<div class="t" style="left:480px;top:506px;font-size:13px;line-height:21px;color:#000">GE</div>
<div class="t" style="left:511px;top:506px;font-size:13px;line-height:21px;color:#000">10:46</div>
<div class="t" style="left:552px;top:506px;font-size:13px;line-height:21px;color:#000">KO</div>
<div class="t" style="left:583px;top:506px;font-size:13px;line-height:21px;color:#000">11:04</div>
<div class="t" style="left:624px;top:506px;font-size:13px;line-height:21px;color:#000">KO</div>
<div class="t" style="left:655px;top:506px;font-size:13px;line-height:21px;color:#000">11:04</div>
<div class="t" style="left:696px;top:506px;font-size:13px;line-height:21px;color:#000">GE</div>
<div class="t" style="left:727px;top:506px;font-size:13px;line-height:21px;color:#000">12:48</div>
<div class="t" style="left:768px;top:506px;font-size:13px;line-height:21px;color:#000">KO</div>
<div class="t" style="left:799px;top:506px;font-size:13px;line-height:21px;color:#000">12:48</div>
<div class="t" style="left:840px;top:506px;font-size:13px;line-height:21px;color:#000">GE</div>
<div class="t" style="left:871px;top:506px;font-size:13px;line-height:21px;color:#000">13:48</div>
<div class="t" style="left:912px;top:506px;font-size:13px;line-height:21px;color:#000">KO</div>
<div style="left:0px;top:528px;width:72px;height:21px;background:#dbe2ea"></div>
<div style="left:72px;top:528px;width:72px;height:21px;background:#d0e4f0"></div>
<div style="left:144px;top:528px;width:72px;height:21px;background:#dbe2ea"></div>
<div style="left:216px;top:528px;width:72px;height:21px;background:#d0e4f0"></div>
<div style="left:288px;top:528px;width:72px;height:21px;background:#dbe2ea"></div>
<div style="left:360px;top:528px;width:72px;height:21px;background:#d0e4f0"></div>
<div style="left:432px;top:528px;width:72px;height:21px;background:#dbe2ea"></div>
<div style="left:504px;top:528px;width:72px;height:21px;background:#d0e4f0"></div>
<div style="left:576px;top:528px;width:72px;height:21px;background:#dbe2ea"></div>
<div style="left:648px;top:528px;width:72px;height:21px;background:#d0e4f0"></div>
<div style="left:720px;top:528px;width:72px;height:21px;background:#dbe2ea"></div>
<div style="left:792px;top:528px;width:72px;height:21px;background:#d0e4f0"></div>
<div style="left:864px;top:528px;width:72px;height:21px;background:#dbe2ea"></div>
<div style="left:0;top:549px;width:905px;height:1px;background:#808080"></div>
<div class="t" style="left:7px;top:528px;font-size:13px;line-height:21px;color:#000">05:13</div>
<div class="t" style="left:48px;top:528px;font-size:13px;line-height:21px;color:#000">GE</div>
<div class="t" style="left:79px;top:528px;font-size:13px;line-height:21px;color:#000">05:14</div>
<div class="t" style="left:120px;top:528px;font-size:13px;line-height:21px;color:#000">KO</div>
<div class="t" style="left:151px;top:528px;font-size:13px;line-height:21px;color:#000">05:14</div>
<div class="t" style="left:192px;top:528px;font-size:13px;line-height:21px;color:#000">GE</div>
<div class="t" style="left:223px;top:528px;font-size:13px;line-height:21px;color:#000">05:19</div>
<div class="t" style="left:264px;top:528px;font-size:13px;line-height:21px;color:#000">KO</div>
<div class="t" style="left:295px;top:528px;font-size:13px;line-height:21px;color:#000">05:24</div>
<div class="t" style="left:336px;top:528px;font-size:13px;line-height:21px;color:#000">GE</div>
<div class="t" style="left:367px;top:528px;font-size:13px;line-height:21px;color:#000">05:27</div>
<div class="t" style="left:408px;top:528px;font-size:13px;line-height:21px;color:#000">KO</div>
<div class="t" style="left:439px;top:528px;font-size:13px;line-height:21px;color:#000">12:06</div>
<div class="t" style="left:480px;top:528px;font-size:13px;line-height:21px;color:#000">KO</div>
<div class="t" style="left:511px;top:528px;font-size:13px;line-height:21px;color:#000">12:27</div>
<div class="t" style="left:552px;top:528px;font-size:13px;line-height:21px;color:#000">KO</div>
<div class="t" style="left:583px;top:528px;font-size:13px;line-height:21px;color:#000">12:27</div>
<div class="t" style="left:624px;top:528px;font-size:13px;line-height:21px;color:#000">GE</div>
<div class="t" style="left:655px;top:528px;font-size:13px;line-height:21px;color:#000">14:58</div>
<div class="t" style="left:696px;top:528px;font-size:13px;line-height:21px;color:#000">KO</div>
<div class="t" style="left:727px;top:528px;font-size:13px;line-height:21px;color:#000">14:58</div>
<div class="t" style="left:768px;top:528px;font-size:13px;line-height:21px;color:#000">GE</div>
<div class="t" style="left:799px;top:528px;font-size:13px;line-height:21px;color:#000">14:59</div>
<div class="t" style="left:840px;top:528px;font-size:13px;line-height:21px;color:#000">KO</div>
<div class="t" style="left:871px;top:528px;font-size:13px;line-height:21px;color:#000">15:17</div>
<div class="t" style="left:912px;top:528px;font-size:13px;line-height:21px;color:#000">GE</div>
<div style="left:0px;top:550px;width:72px;height:21px;background:#cfdde4"></div>
<div style="left:72px;top:550px;width:72px;height:21px;background:#bad6e4"></div>
<div style="left:144px;top:550px;width:72px;height:21px;background:#cfdde4"></div>
<div style="left:216px;top:550px;width:72px;height:21px;background:#bad6e4"></div>
<div style="left:288px;top:550px;width:72px;height:21px;background:#cfdde4"></div>
<div style="left:360px;top:550px;width:72px;height:21px;background:#bad6e4"></div>
<div style="left:432px;top:550px;width:72px;height:21px;background:#cfdde4"></div>
<div style="left:504px;top:550px;width:72px;height:21px;background:#bad6e4"></div>
<div style="left:576px;top:550px;width:72px;height:21px;background:#cfdde4"></div>
<div style="left:648px;top:550px;width:72px;height:21px;background:#bad6e4"></div>
<div style="left:720px;top:550px;width:72px;height:21px;background:#cfdde4"></div>
<div style="left:792px;top:550px;width:72px;height:21px;background:#bad6e4"></div>
<div style="left:864px;top:550px;width:72px;height:21px;background:#cfdde4"></div>
<div style="left:0;top:571px;width:905px;height:1px;background:#808080"></div>
<div style="left:0px;top:572px;width:72px;height:21px;background:#e3e3e3"></div>
<div style="left:72px;top:572px;width:72px;height:21px;background:#fafafa"></div>
<div style="left:144px;top:572px;width:72px;height:21px;background:#e3e3e3"></div>
<div style="left:216px;top:572px;width:72px;height:21px;background:#fafafa"></div>
<div style="left:288px;top:572px;width:72px;height:21px;background:#e3e3e3"></div>
<div style="left:360px;top:572px;width:72px;height:21px;background:#fafafa"></div>
<div style="left:432px;top:572px;width:72px;height:21px;background:#e3e3e3"></div>
<div style="left:504px;top:572px;width:72px;height:21px;background:#fafafa"></div>
<div style="left:576px;top:572px;width:72px;height:21px;background:#e3e3e3"></div>
<div style="left:648px;top:572px;width:72px;height:21px;background:#fafafa"></div>
<div style="left:720px;top:572px;width:72px;height:21px;background:#e3e3e3"></div>
<div style="left:792px;top:572px;width:72px;height:21px;background:#fafafa"></div>
<div style="left:864px;top:572px;width:72px;height:21px;background:#e3e3e3"></div>
<div style="left:0;top:593px;width:905px;height:1px;background:#808080"></div>
<div class="t" style="left:7px;top:572px;font-size:13px;line-height:21px;color:#000">05:13</div>
<div class="t" style="left:48px;top:572px;font-size:13px;line-height:21px;color:#000">KO</div>
<div class="t" style="left:79px;top:572px;font-size:13px;line-height:21px;color:#000">05:14</div>
<div class="t" style="left:120px;top:572px;font-size:13px;line-height:21px;color:#000">GE</div>
<div class="t" style="left:151px;top:572px;font-size:13px;line-height:21px;color:#000">05:15</div>
<div class="t" style="left:192px;top:572px;font-size:13px;line-height:21px;color:#000">KO</div>
<div class="t" style="left:223px;top:572px;font-size:13px;line-height:21px;color:#000">07:41</div>
<div class="t" style="left:264px;top:572px;font-size:13px;line-height:21px;color:#000">KO</div>
<div class="t" style="left:295px;top:572px;font-size:13px;line-height:21px;color:#000">15:34</div>
<div class="t" style="left:336px;top:572px;font-size:13px;line-height:21px;color:#000">GE</div>
<div style="left:0px;top:594px;width:72px;height:21px;background:#e3e3e3"></div>
<div style="left:72px;top:594px;width:72px;height:21px;background:#fafafa"></div>
<div style="left:144px;top:594px;width:72px;height:21px;background:#e3e3e3"></div>
<div style="left:216px;top:594px;width:72px;height:21px;background:#fafafa"></div>
<div style="left:288px;top:594px;width:72px;height:21px;background:#e3e3e3"></div>
<div style="left:360px;top:594px;width:72px;height:21px;background:#fafafa"></div>
<div style="left:432px;top:594px;width:72px;height:21px;background:#e3e3e3"></div>
<div style="left:504px;top:594px;width:72px;height:21px;background:#fafafa"></div>
<div style="left:576px;top:594px;width:72px;height:21px;background:#e3e3e3"></div>
<div style="left:648px;top:594px;width:72px;height:21px;background:#fafafa"></div>
<div style="left:720px;top:594px;width:72px;height:21px;background:#e3e3e3"></div>
<div style="left:792px;top:594px;width:72px;height:21px;background:#fafafa"></div>
<div style="left:864px;top:594px;width:72px;height:21px;background:#e3e3e3"></div>
<div style="left:0;top:615px;width:905px;height:1px;background:#808080"></div>
<div class="t" style="left:7px;top:594px;font-size:13px;line-height:21px;color:#000">05:16</div>
<div class="t" style="left:48px;top:594px;font-size:13px;line-height:21px;color:#000">KO</div>
<div class="t" style="left:79px;top:594px;font-size:13px;line-height:21px;color:#000">05:31</div>
<div class="t" style="left:120px;top:594px;font-size:13px;line-height:21px;color:#000">KO</div>
<div class="t" style="left:151px;top:594px;font-size:13px;line-height:21px;color:#000">05:31</div>
<div class="t" style="left:192px;top:594px;font-size:13px;line-height:21px;color:#000">GE</div>
<div class="t" style="left:223px;top:594px;font-size:13px;line-height:21px;color:#000">05:54</div>
<div class="t" style="left:264px;top:594px;font-size:13px;line-height:21px;color:#000">KO</div>
<div class="t" style="left:295px;top:594px;font-size:13px;line-height:21px;color:#000">05:55</div>
<div class="t" style="left:336px;top:594px;font-size:13px;line-height:21px;color:#000">GE</div>
<div class="t" style="left:367px;top:594px;font-size:13px;line-height:21px;color:#000">05:55</div>
<div class="t" style="left:408px;top:594px;font-size:13px;line-height:21px;color:#000">KO</div>
<div class="t" style="left:439px;top:594px;font-size:13px;line-height:21px;color:#000">06:18</div>
<div class="t" style="left:480px;top:594px;font-size:13px;line-height:21px;color:#000">KO</div>
<div class="t" style="left:511px;top:594px;font-size:13px;line-height:21px;color:#000">06:22</div>
<div class="t" style="left:552px;top:594px;font-size:13px;line-height:21px;color:#000">GE</div>
<div class="t" style="left:583px;top:594px;font-size:13px;line-height:21px;color:#000">06:25</div>
<div class="t" style="left:624px;top:594px;font-size:13px;line-height:21px;color:#000">KO</div>
<div class="t" style="left:655px;top:594px;font-size:13px;line-height:21px;color:#000">07:18</div>
<div class="t" style="left:696px;top:594px;font-size:13px;line-height:21px;color:#000">KO</div>
<div class="t" style="left:727px;top:594px;font-size:13px;line-height:21px;color:#000">16:32</div>
<div class="t" style="left:768px;top:594px;font-size:13px;line-height:21px;color:#000">GE</div>
<div class="t" style="left:799px;top:594px;font-size:13px;line-height:21px;color:#000">18:48</div>
<div class="t" style="left:840px;top:594px;font-size:13px;line-height:21px;color:#000">KO</div>
<div class="t" style="left:871px;top:594px;font-size:13px;line-height:21px;color:#000">18:49</div>
<div class="t" style="left:912px;top:594px;font-size:13px;line-height:21px;color:#000">GE</div>
<div style="left:0px;top:616px;width:72px;height:21px;background:#e3e3e3"></div>
<div style="left:72px;top:616px;width:72px;height:21px;background:#fafafa"></div>
<div style="left:144px;top:616px;width:72px;height:21px;background:#e3e3e3"></div>
<div style="left:216px;top:616px;width:72px;height:21px;background:#fafafa"></div>
<div style="left:288px;top:616px;width:72px;height:21px;background:#e3e3e3"></div>
<div style="left:360px;top:616px;width:72px;height:21px;background:#fafafa"></div>
<div style="left:432px;top:616px;width:72px;height:21px;background:#e3e3e3"></div>
<div style="left:504px;top:616px;width:72px;height:21px;background:#fafafa"></div>
<div style="left:576px;top:616px;width:72px;height:21px;background:#e3e3e3"></div>
<div style="left:648px;top:616px;width:72px;height:21px;background:#fafafa"></div>
<div style="left:720px;top:616px;width:72px;height:21px;background:#e3e3e3"></div>
<div style="left:792px;top:616px;width:72px;height:21px;background:#fafafa"></div>
<div style="left:864px;top:616px;width:72px;height:21px;background:#e3e3e3"></div>
<div style="left:0;top:637px;width:905px;height:1px;background:#808080"></div>
<div class="t" style="left:7px;top:616px;font-size:13px;line-height:21px;color:#000">07:41</div>
<div class="t" style="left:48px;top:616px;font-size:13px;line-height:21px;color:#000">KO</div>
<div class="t" style="left:79px;top:616px;font-size:13px;line-height:21px;color:#000">09:39</div>
<div class="t" style="left:120px;top:616px;font-size:13px;line-height:21px;color:#000">GE</div>
<div class="t" style="left:151px;top:616px;font-size:13px;line-height:21px;color:#000">09:39</div>
<div class="t" style="left:192px;top:616px;font-size:13px;line-height:21px;color:#000">KO</div>
<div class="t" style="left:223px;top:616px;font-size:13px;line-height:21px;color:#000">13:33</div>
<div class="t" style="left:264px;top:616px;font-size:13px;line-height:21px;color:#000">GE</div>
<div class="t" style="left:295px;top:616px;font-size:13px;line-height:21px;color:#000">13:33</div>
<div class="t" style="left:336px;top:616px;font-size:13px;line-height:21px;color:#000">KO</div>
<div class="t" style="left:367px;top:616px;font-size:13px;line-height:21px;color:#000">13:47</div>
<div class="t" style="left:408px;top:616px;font-size:13px;line-height:21px;color:#000">GE</div>
<div class="t" style="left:439px;top:616px;font-size:13px;line-height:21px;color:#000">13:47</div>
<div class="t" style="left:480px;top:616px;font-size:13px;line-height:21px;color:#000">KO</div>
<div class="t" style="left:511px;top:616px;font-size:13px;line-height:21px;color:#000">13:53</div>
<div class="t" style="left:552px;top:616px;font-size:13px;line-height:21px;color:#000">KO</div>
<div class="t" style="left:583px;top:616px;font-size:13px;line-height:21px;color:#000">13:53</div>
<div class="t" style="left:624px;top:616px;font-size:13px;line-height:21px;color:#000">GE</div>
<div class="t" style="left:655px;top:616px;font-size:13px;line-height:21px;color:#000">13:56</div>
<div class="t" style="left:696px;top:616px;font-size:13px;line-height:21px;color:#000">KO</div>
<div class="t" style="left:727px;top:616px;font-size:13px;line-height:21px;color:#000">13:56</div>
<div class="t" style="left:768px;top:616px;font-size:13px;line-height:21px;color:#000">GE</div>
<div class="t" style="left:799px;top:616px;font-size:13px;line-height:21px;color:#000">13:59</div>
<div class="t" style="left:840px;top:616px;font-size:13px;line-height:21px;color:#000">KO</div>
<div class="t" style="left:871px;top:616px;font-size:13px;line-height:21px;color:#000">13:59</div>
<div class="t" style="left:912px;top:616px;font-size:13px;line-height:21px;color:#000">GE</div>
<div style="left:0px;top:638px;width:72px;height:21px;background:#e3e3e3"></div>
<div style="left:72px;top:638px;width:72px;height:21px;background:#fafafa"></div>
<div style="left:144px;top:638px;width:72px;height:21px;background:#e3e3e3"></div>
<div style="left:216px;top:638px;width:72px;height:21px;background:#fafafa"></div>
<div style="left:288px;top:638px;width:72px;height:21px;background:#e3e3e3"></div>
<div style="left:360px;top:638px;width:72px;height:21px;background:#fafafa"></div>
<div style="left:432px;top:638px;width:72px;height:21px;background:#e3e3e3"></div>
<div style="left:504px;top:638px;width:72px;height:21px;background:#fafafa"></div>
<div style="left:576px;top:638px;width:72px;height:21px;background:#e3e3e3"></div>
<div style="left:648px;top:638px;width:72px;height:21px;background:#fafafa"></div>
<div style="left:720px;top:638px;width:72px;height:21px;background:#e3e3e3"></div>
<div style="left:792px;top:638px;width:72px;height:21px;background:#fafafa"></div>
<div style="left:864px;top:638px;width:72px;height:21px;background:#e3e3e3"></div>
<div style="left:0;top:659px;width:905px;height:1px;background:#808080"></div>
<div style="left:0px;top:660px;width:72px;height:21px;background:#e3e3e3"></div>
<div style="left:72px;top:660px;width:72px;height:21px;background:#fafafa"></div>
<div style="left:144px;top:660px;width:72px;height:21px;background:#e3e3e3"></div>
<div style="left:216px;top:660px;width:72px;height:21px;background:#fafafa"></div>
<div style="left:288px;top:660px;width:72px;height:21px;background:#e3e3e3"></div>
<div style="left:360px;top:660px;width:72px;height:21px;background:#fafafa"></div>
<div style="left:432px;top:660px;width:72px;height:21px;background:#e3e3e3"></div>
<div style="left:504px;top:660px;width:72px;height:21px;background:#fafafa"></div>
<div style="left:576px;top:660px;width:72px;height:21px;background:#e3e3e3"></div>
<div style="left:648px;top:660px;width:72px;height:21px;background:#fafafa"></div>
<div style="left:720px;top:660px;width:72px;height:21px;background:#e3e3e3"></div>
<div style="left:792px;top:660px;width:72px;height:21px;background:#fafafa"></div>
<div style="left:864px;top:660px;width:72px;height:21px;background:#e3e3e3"></div>
<div style="left:0;top:681px;width:905px;height:1px;background:#808080"></div>
<div class="t" style="left:7px;top:660px;font-size:13px;line-height:21px;color:#000">06:52</div>
<div class="t" style="left:48px;top:660px;font-size:13px;line-height:21px;color:#000">KO</div>
<div class="t" style="left:79px;top:660px;font-size:13px;line-height:21px;color:#000">15:04</div>
<div class="t" style="left:120px;top:660px;font-size:13px;line-height:21px;color:#000">GE</div>
<div style="left:0px;top:682px;width:72px;height:21px;background:#dbe2ea"></div>
<div style="left:72px;top:682px;width:72px;height:21px;background:#d0e4f0"></div>
<div style="left:144px;top:682px;width:72px;height:21px;background:#dbe2ea"></div>
<div style="left:216px;top:682px;width:72px;height:21px;background:#d0e4f0"></div>
<div style="left:288px;top:682px;width:72px;height:21px;background:#dbe2ea"></div>
<div style="left:360px;top:682px;width:72px;height:21px;background:#d0e4f0"></div>
<div style="left:432px;top:682px;width:72px;height:21px;background:#dbe2ea"></div>
<div style="left:504px;top:682px;width:72px;height:21px;background:#d0e4f0"></div>
<div style="left:576px;top:682px;width:72px;height:21px;background:#dbe2ea"></div>
<div style="left:648px;top:682px;width:72px;height:21px;background:#d0e4f0"></div>
<div style="left:720px;top:682px;width:72px;height:21px;background:#dbe2ea"></div>
<div style="left:792px;top:682px;width:72px;height:21px;background:#d0e4f0"></div>
<div style="left:864px;top:682px;width:72px;height:21px;background:#dbe2ea"></div>
<div style="left:0;top:703px;width:905px;height:1px;background:#808080"></div>
<div style="left:0px;top:704px;width:72px;height:21px;background:#cfdde4"></div>
<div style="left:72px;top:704px;width:72px;height:21px;background:#bad6e4"></div>
<div style="left:144px;top:704px;width:72px;height:21px;background:#cfdde4"></div>
<div style="left:216px;top:704px;width:72px;height:21px;background:#bad6e4"></div>
<div style="left:288px;top:704px;width:72px;height:21px;background:#cfdde4"></div>
<div style="left:360px;top:704px;width:72px;height:21px;background:#bad6e4"></div>
<div style="left:432px;top:704px;width:72px;height:21px;background:#cfdde4"></div>
<div style="left:504px;top:704px;width:72px;height:21px;background:#bad6e4"></div>
<div style="left:576px;top:704px;width:72px;height:21px;background:#cfdde4"></div>
<div style="left:648px;top:704px;width:72px;height:21px;background:#bad6e4"></div>
<div style="left:720px;top:704px;width:72px;height:21px;background:#cfdde4"></div>
<div style="left:792px;top:704px;width:72px;height:21px;background:#bad6e4"></div>
<div style="left:864px;top:704px;width:72px;height:21px;background:#cfdde4"></div>
<div style="left:0;top:725px;width:905px;height:1px;background:#808080"></div>
<div style="left:0px;top:726px;width:72px;height:21px;background:#e3e3e3"></div>
<div style="left:72px;top:726px;width:72px;height:21px;background:#fafafa"></div>
<div style="left:144px;top:726px;width:72px;height:21px;background:#e3e3e3"></div>
<div style="left:216px;top:726px;width:72px;height:21px;background:#fafafa"></div>
<div style="left:288px;top:726px;width:72px;height:21px;background:#e3e3e3"></div>
<div style="left:360px;top:726px;width:72px;height:21px;background:#fafafa"></div>
<div style="left:432px;top:726px;width:72px;height:21px;background:#e3e3e3"></div>
<div style="left:504px;top:726px;width:72px;height:21px;background:#fafafa"></div>
<div style="left:576px;top:726px;width:72px;height:21px;background:#e3e3e3"></div>
<div style="left:648px;top:726px;width:72px;height:21px;background:#fafafa"></div>
<div style="left:720px;top:726px;width:72px;height:21px;background:#e3e3e3"></div>
<div style="left:792px;top:726px;width:72px;height:21px;background:#fafafa"></div>
<div style="left:864px;top:726px;width:72px;height:21px;background:#e3e3e3"></div>
<div style="left:0;top:747px;width:905px;height:1px;background:#808080"></div>
<div style="left:0px;top:748px;width:72px;height:21px;background:#e3e3e3"></div>
<div style="left:72px;top:748px;width:72px;height:21px;background:#fafafa"></div>
<div style="left:144px;top:748px;width:72px;height:21px;background:#e3e3e3"></div>
<div style="left:216px;top:748px;width:72px;height:21px;background:#fafafa"></div>
<div style="left:288px;top:748px;width:72px;height:21px;background:#e3e3e3"></div>
<div style="left:360px;top:748px;width:72px;height:21px;background:#fafafa"></div>
<div style="left:432px;top:748px;width:72px;height:21px;background:#e3e3e3"></div>
<div style="left:504px;top:748px;width:72px;height:21px;background:#fafafa"></div>
<div style="left:576px;top:748px;width:72px;height:21px;background:#e3e3e3"></div>
<div style="left:648px;top:748px;width:72px;height:21px;background:#fafafa"></div>
<div style="left:720px;top:748px;width:72px;height:21px;background:#e3e3e3"></div>
<div style="left:792px;top:748px;width:72px;height:21px;background:#fafafa"></div>
<div style="left:864px;top:748px;width:72px;height:21px;background:#e3e3e3"></div>
<div style="left:0;top:769px;width:905px;height:1px;background:#808080"></div>
<div class="t" style="left:7px;top:748px;font-size:13px;line-height:21px;color:#000">05:00</div>
<div class="t" style="left:48px;top:748px;font-size:13px;line-height:21px;color:#000">KO</div>
<div style="left:0px;top:770px;width:72px;height:21px;background:#e3e3e3"></div>
<div style="left:72px;top:770px;width:72px;height:21px;background:#fafafa"></div>
<div style="left:144px;top:770px;width:72px;height:21px;background:#e3e3e3"></div>
<div style="left:216px;top:770px;width:72px;height:21px;background:#fafafa"></div>
<div style="left:288px;top:770px;width:72px;height:21px;background:#e3e3e3"></div>
<div style="left:360px;top:770px;width:72px;height:21px;background:#fafafa"></div>
<div style="left:432px;top:770px;width:72px;height:21px;background:#e3e3e3"></div>
<div style="left:504px;top:770px;width:72px;height:21px;background:#fafafa"></div>
<div style="left:576px;top:770px;width:72px;height:21px;background:#e3e3e3"></div>
<div style="left:648px;top:770px;width:72px;height:21px;background:#fafafa"></div>
<div style="left:720px;top:770px;width:72px;height:21px;background:#e3e3e3"></div>
<div style="left:792px;top:770px;width:72px;height:21px;background:#fafafa"></div>
<div style="left:864px;top:770px;width:72px;height:21px;background:#e3e3e3"></div>
<div style="left:0;top:791px;width:905px;height:1px;background:#808080"></div>
</div>
<div style="left:1584px;top:201px;width:1px;height:784px;background:#fafafa"></div>
<div style="left:1585px;top:177px;width:16px;height:825px;background:#f0f0f0"></div>
<div style="left:1585px;top:218px;width:15px;height:742px;background:#cdcdcd"></div>
<svg style="left:1585px;top:204px" width="16" height="12" viewBox="0 0 16 12"><path d="M4.5 7.5 L8 4 L11.5 7.5" fill="none" stroke="#606060" stroke-width="1.8"/></svg>
<svg style="left:1585px;top:971px" width="16" height="12" viewBox="0 0 16 12"><path d="M4.5 4 L8 7.5 L11.5 4" fill="none" stroke="#606060" stroke-width="1.8"/></svg>
<div style="left:317px;top:985px;width:360px;height:17px;background:#f0f0f0"></div>
<svg style="left:319px;top:987px" width="12" height="13" viewBox="0 0 12 13"><path d="M7.5 3 L4 6.5 L7.5 10" fill="none" stroke="#606060" stroke-width="1.8"/></svg>
<svg style="left:663px;top:987px" width="12" height="13" viewBox="0 0 12 13"><path d="M4 3 L7.5 6.5 L4 10" fill="none" stroke="#606060" stroke-width="1.8"/></svg>
<div style="left:679px;top:985px;width:906px;height:17px;background:#f0f0f0"></div>
<div style="left:696px;top:986px;width:272px;height:14px;background:#cdcdcd"></div>
<svg style="left:681px;top:987px" width="12" height="13" viewBox="0 0 12 13"><path d="M7.5 3 L4 6.5 L7.5 10" fill="none" stroke="#606060" stroke-width="1.8"/></svg>
<svg style="left:1570px;top:987px" width="12" height="13" viewBox="0 0 12 13"><path d="M4 3 L7.5 6.5 L4 10" fill="none" stroke="#606060" stroke-width="1.8"/></svg>
<div style="left:1602px;top:176px;width:300px;height:827px;border:1px solid #7b8189;background:#fff"></div>
<div style="left:1603px;top:177px;width:297px;height:20px;background:#ededed"></div>
<div class="t" style="left:1606px;top:177px;font-size:14px;font-weight:bold;line-height:22px;letter-spacing:0.35px">Personaldaten</div>
<svg style="left:1861px;top:182px" width="14" height="10" viewBox="0 0 14 10"><path d="M2.5 7.5 L7 3 L11.5 7.5" fill="none" stroke="#707070" stroke-width="2.6" stroke-linecap="round" stroke-linejoin="round"/><path d="M2.5 7.5 L7 3 L11.5 7.5" fill="none" stroke="#f4f4f4" stroke-width="0.8" stroke-linecap="round"/></svg>
<div class="t" style="left:1606px;top:198px;font-size:13px;line-height:20px">Personalnummer</div>
<div class="t" style="left:1676px;top:198px;width:200px;font-size:13px;line-height:20px;text-align:right;color:#0000ff;text-decoration:underline">158</div>
<div class="t" style="left:1606px;top:218px;font-size:13px;line-height:20px">Ausweisnummer</div>
<div class="t" style="left:1676px;top:218px;width:200px;font-size:13px;line-height:20px;text-align:right;color:#0000ff;text-decoration:underline">2</div>
<div class="t" style="left:1606px;top:238px;font-size:13px;line-height:20px">Name</div>
<div class="t" style="left:1676px;top:238px;width:200px;font-size:13px;line-height:20px;text-align:right">Ackermann</div>
<div class="t" style="left:1606px;top:258px;font-size:13px;line-height:20px">Vorname</div>
<div class="t" style="left:1676px;top:258px;width:200px;font-size:13px;line-height:20px;text-align:right">Uwe</div>
<div class="t" style="left:1606px;top:278px;font-size:13px;line-height:20px">Abteilung</div>
<div class="t" style="left:1676px;top:278px;width:200px;font-size:13px;line-height:20px;text-align:right">VERT</div>
<div class="t" style="left:1606px;top:298px;font-size:13px;line-height:20px">Org.-Einheit</div>
<div class="t" style="left:1676px;top:298px;width:200px;font-size:13px;line-height:20px;text-align:right">VERW</div>
<div style="left:1603px;top:317px;width:297px;height:20px;background:#ededed"></div>
<div class="t" style="left:1606px;top:317px;font-size:14px;font-weight:bold;line-height:22px;letter-spacing:0.35px">Anzeigesalden</div>
<svg style="left:1861px;top:322px" width="14" height="10" viewBox="0 0 14 10"><path d="M2.5 7.5 L7 3 L11.5 7.5" fill="none" stroke="#707070" stroke-width="2.6" stroke-linecap="round" stroke-linejoin="round"/><path d="M2.5 7.5 L7 3 L11.5 7.5" fill="none" stroke="#f4f4f4" stroke-width="0.8" stroke-linecap="round"/></svg>
<div class="t" style="left:1606px;top:338px;font-size:13px;line-height:20px">Kontenstände vom</div>
<div class="t" style="left:1676px;top:338px;width:200px;font-size:13px;line-height:20px;text-align:right">06.05.2017</div>
<div class="t" style="left:1606px;top:358px;font-size:13px;line-height:20px">Gleitzeit</div>
<div class="t" style="left:1676px;top:358px;width:200px;font-size:13px;line-height:20px;text-align:right">-2.00</div>
<div class="t" style="left:1606px;top:378px;font-size:13px;line-height:20px">Sparzeit</div>
<div class="t" style="left:1676px;top:378px;width:200px;font-size:13px;line-height:20px;text-align:right">0.00</div>
<div class="t" style="left:1606px;top:398px;font-size:13px;line-height:20px">Überstunden</div>
<div class="t" style="left:1676px;top:398px;width:200px;font-size:13px;line-height:20px;text-align:right">0.00</div>
<div class="t" style="left:1606px;top:418px;font-size:13px;line-height:20px">Resturlaub</div>
<div class="t" style="left:1676px;top:418px;width:200px;font-size:13px;line-height:20px;text-align:right">0.00</div>
<div style="left:1603px;top:437px;width:297px;height:20px;background:#ededed"></div>
<div class="t" style="left:1606px;top:437px;font-size:14px;font-weight:bold;line-height:22px;letter-spacing:0.35px">Kontenstände</div>
<svg style="left:1861px;top:442px" width="14" height="10" viewBox="0 0 14 10"><path d="M2.5 7.5 L7 3 L11.5 7.5" fill="none" stroke="#707070" stroke-width="2.6" stroke-linecap="round" stroke-linejoin="round"/><path d="M2.5 7.5 L7 3 L11.5 7.5" fill="none" stroke="#f4f4f4" stroke-width="0.8" stroke-linecap="round"/></svg>
<div class="t" style="left:1606px;top:458px;font-size:13px;line-height:20px">001 Gesamtanwese...</div>
<div class="t" style="left:1676px;top:458px;width:200px;font-size:13px;line-height:20px;text-align:right">8.18</div>
<div class="t" style="left:1606px;top:478px;font-size:13px;line-height:20px">002 Sollzeitstunden</div>
<div class="t" style="left:1676px;top:478px;width:200px;font-size:13px;line-height:20px;text-align:right">7.80</div>
<div class="t" style="left:1606px;top:498px;font-size:13px;line-height:20px">003 Gleitzeitstunden</div>
<div class="t" style="left:1676px;top:498px;width:200px;font-size:13px;line-height:20px;text-align:right">0.38</div>
<div class="t" style="left:1606px;top:518px;font-size:13px;line-height:20px">021 Normalstunden</div>
<div class="t" style="left:1676px;top:518px;width:200px;font-size:13px;line-height:20px;text-align:right">7.80</div>
<div class="t" style="left:1606px;top:538px;font-size:13px;line-height:20px">063 Anwesenheitstage</div>
<div class="t" style="left:1676px;top:538px;width:200px;font-size:13px;line-height:20px;text-align:right">1.00</div>
<div class="t" style="left:1606px;top:558px;font-size:13px;line-height:20px">0900</div>
<div class="t" style="left:1676px;top:558px;width:200px;font-size:13px;line-height:20px;text-align:right">0.02</div>
<div class="t" style="left:1606px;top:578px;font-size:13px;line-height:20px">1001</div>
<div class="t" style="left:1676px;top:578px;width:200px;font-size:13px;line-height:20px;text-align:right">8.18</div>
<div class="t" style="left:1606px;top:598px;font-size:13px;line-height:20px">1003</div>
<div class="t" style="left:1676px;top:598px;width:200px;font-size:13px;line-height:20px;text-align:right">7.80</div>
<div class="t" style="left:1606px;top:618px;font-size:13px;line-height:20px">1004</div>
<div class="t" style="left:1676px;top:618px;width:200px;font-size:13px;line-height:20px;text-align:right">7.80</div>
<div class="t" style="left:1606px;top:638px;font-size:13px;line-height:20px">4000</div>
<div class="t" style="left:1676px;top:638px;width:200px;font-size:13px;line-height:20px;text-align:right">0.38</div>
<div class="t" style="left:1606px;top:658px;font-size:13px;line-height:20px">8901</div>
<div class="t" style="left:1676px;top:658px;width:200px;font-size:13px;line-height:20px;text-align:right">13.38</div>
<div class="t" style="left:1606px;top:678px;font-size:13px;line-height:20px">8911</div>
<div class="t" style="left:1676px;top:678px;width:200px;font-size:13px;line-height:20px;text-align:right">0.50</div>
<div class="t" style="left:1606px;top:698px;font-size:13px;line-height:20px">8996</div>
<div class="t" style="left:1676px;top:698px;width:200px;font-size:13px;line-height:20px;text-align:right">7.88</div>
<div class="t" style="left:1606px;top:718px;font-size:13px;line-height:20px">8997</div>
<div class="t" style="left:1676px;top:718px;width:200px;font-size:13px;line-height:20px;text-align:right">16.57</div>
<div class="t" style="left:1606px;top:738px;font-size:13px;line-height:20px">8998</div>
<div class="t" style="left:1676px;top:738px;width:200px;font-size:13px;line-height:20px;text-align:right">7.88</div>
<div class="t" style="left:1606px;top:758px;font-size:13px;line-height:20px">8999</div>
<div class="t" style="left:1676px;top:758px;width:200px;font-size:13px;line-height:20px;text-align:right">16.57</div>
<div style="left:1603px;top:777px;width:297px;height:20px;background:#ededed"></div>
<div class="t" style="left:1606px;top:777px;font-size:14px;font-weight:bold;line-height:22px;letter-spacing:0.35px">Genehmigung</div>
<svg style="left:1861px;top:782px" width="14" height="10" viewBox="0 0 14 10"><path d="M2.5 7.5 L7 3 L11.5 7.5" fill="none" stroke="#707070" stroke-width="2.6" stroke-linecap="round" stroke-linejoin="round"/><path d="M2.5 7.5 L7 3 L11.5 7.5" fill="none" stroke="#f4f4f4" stroke-width="0.8" stroke-linecap="round"/></svg>
<div class="t" style="left:1606px;top:798px;font-size:13px;line-height:20px">Genehmigung seit</div>
<div class="t" style="left:1676px;top:798px;width:200px;font-size:13px;line-height:20px;text-align:right">Eintrittsdatum</div>
<div class="t" style="left:1606px;top:818px;font-size:13px;line-height:20px">Genehmigung für</div>
<div class="t" style="left:1676px;top:818px;width:200px;font-size:13px;line-height:20px;text-align:right">GZ</div>
<svg style="left:0px;top:522px" width="14" height="18" viewBox="0 0 14 18"><path d="M9.5 4.5 L5 9 L9.5 13.5" fill="none" stroke="#707070" stroke-width="2.6" stroke-linecap="round" stroke-linejoin="round"/><path d="M9.5 4.5 L5 9 L9.5 13.5" fill="none" stroke="#f4f4f4" stroke-width="0.8" stroke-linecap="round"/></svg>
<svg style="left:1903px;top:522px" width="14" height="18" viewBox="0 0 14 18"><path d="M4.5 4.5 L9 9 L4.5 13.5" fill="none" stroke="#707070" stroke-width="2.6" stroke-linecap="round" stroke-linejoin="round"/><path d="M4.5 4.5 L9 9 L4.5 13.5" fill="none" stroke="#f4f4f4" stroke-width="0.8" stroke-linecap="round"/></svg>
<div style="left:0px;top:1021px;width:1918px;height:17px;background:#f0f0f0;border-top:1px solid #a0a0a0;border-left:1px solid #a8a8a8"></div>
<div style="left:1px;top:1022px;width:1917px;height:1px;background:#707070"></div>
<div style="left:1px;top:1022px;width:1px;height:16px;background:#707070"></div>
<div style="left:2px;top:1023px;width:1916px;height:1px;background:#f8f8f8"></div>
<div style="left:0px;top:1038px;width:1920px;height:2px;background:#fff"></div>
<div style="left:1918px;top:1021px;width:2px;height:19px;background:#fff"></div></body></html>
